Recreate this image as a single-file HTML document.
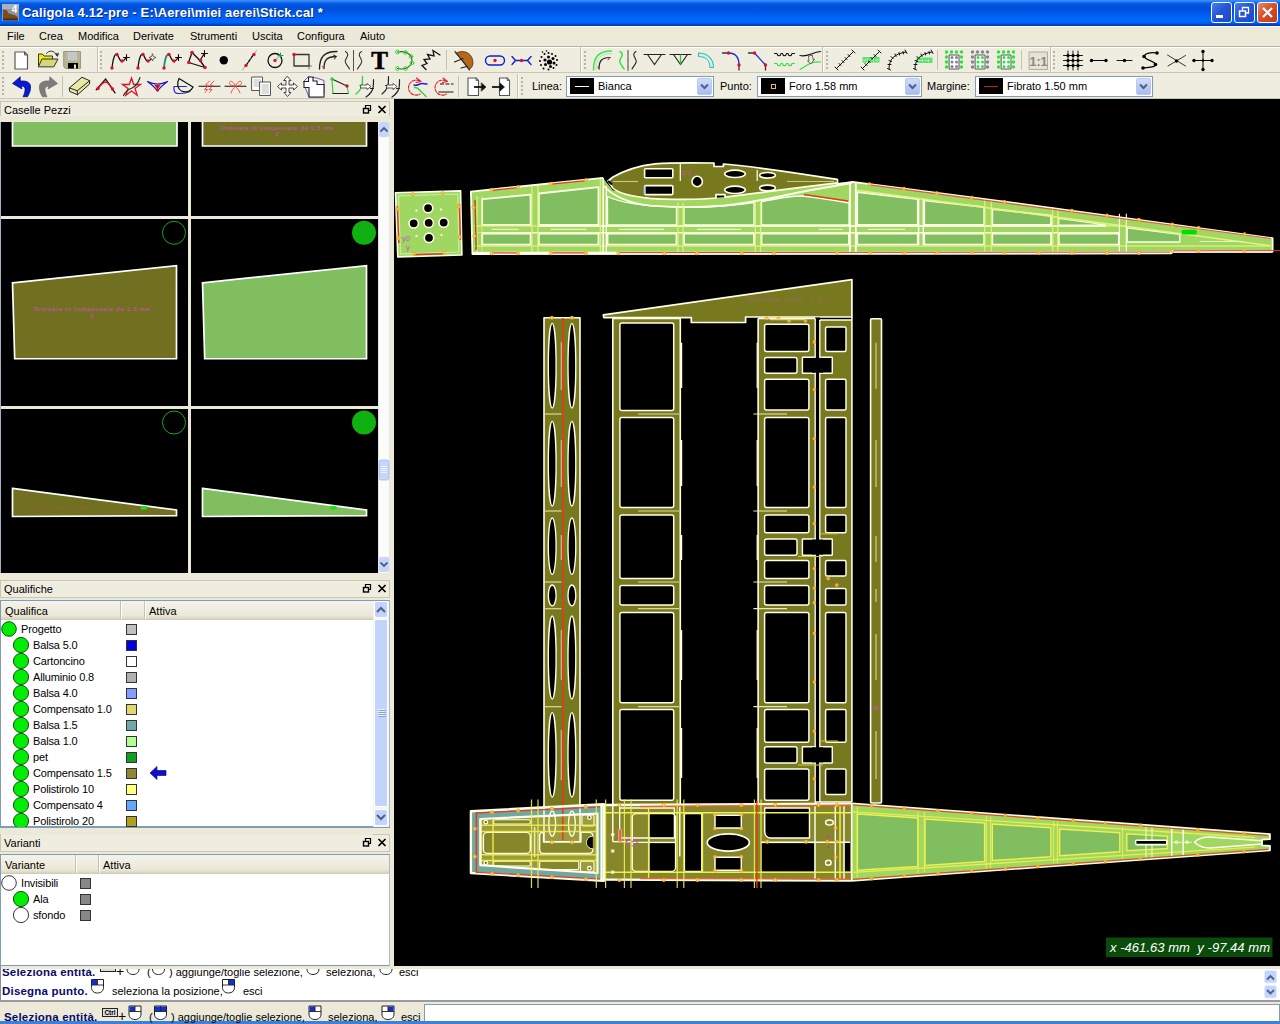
<!DOCTYPE html>
<html lang="it">
<head>
<meta charset="utf-8">
<title>Caligola 4.12-pre</title>
<style>
*{box-sizing:border-box;margin:0;padding:0}
html,body{width:1280px;height:1024px;overflow:hidden;background:#ece9d8;font-family:"Liberation Sans",sans-serif;font-size:11px;color:#000}
.abs{position:absolute}
#title{position:absolute;left:0;top:0;width:1280px;height:26px;background:linear-gradient(to bottom,#3a93ff 0px,#2a80f8 1.5px,#0a5ee8 3px,#0055e0 5px,#0050d8 8px,#0055e6 12px,#0062f8 17px,#0068ff 21px,#0060f0 23px,#0048d0 24.5px,#0038b8 26px)}
#title .cap{position:absolute;left:22px;top:5px;font-family:"Liberation Sans",sans-serif;font-weight:bold;font-size:13px;color:#fff;letter-spacing:0.15px;text-shadow:1px 1px 0 #0a2a80;white-space:nowrap}
#menu{position:absolute;left:0;top:26px;width:1280px;height:20px;background:#ece9d8;border-top:1px solid #fbfaf5}
#menu span{position:absolute;top:3px;font-size:11px;white-space:nowrap}
#tb1{position:absolute;left:0;top:46px;width:1280px;height:27px;background:#efede0;border-top:1px solid #b8b2a2;box-shadow:inset 0 1px 0 #fff;border-bottom:1px solid #c9c6b6}
#tb2{position:absolute;left:0;top:73px;width:1280px;height:26px;background:#efede0;border-bottom:1px solid #c9c6b6}
#canvas{position:absolute;left:394px;top:99px;width:886px;height:867px;background:#000}
#leftdock{position:absolute;left:0;top:99px;width:394px;height:869px;background:#ece9d8}
#bottom{position:absolute;left:0;top:966px;width:1280px;height:58px;background:#ece9d8}

.lbl{position:absolute;top:80px;font-size:11px;white-space:nowrap}
.combo{position:absolute;top:76px;height:21px;background:#fff;border:1px solid #7f9db9}
.combo .sw{position:absolute;left:3px;top:1px;width:24px;height:16px;background:#000}
.combo .tx{position:absolute;left:31px;top:3px;font-size:11px;white-space:nowrap}
.combo .dd{position:absolute;right:1px;top:1px;width:15px;height:17px;border-radius:2px;background:linear-gradient(to bottom,#d3defa,#b9c9f5 60%,#aabcf0);border:1px solid #b7c8f6}
.tbtn{position:absolute;top:2px;width:21px;height:21px;border:1px solid #fff;border-radius:3px;background:linear-gradient(135deg,#4a7ee8 0%,#2456d8 45%,#1c4ac8 100%)}
.tbtn.close{background:linear-gradient(135deg,#e8886a 0%,#d8502a 45%,#c03a18 100%)}

.phd{position:absolute;left:0;width:390px;height:18px;border:1px solid #c9c6b4;background:#efede0}
.phd span{position:absolute;left:3px;top:2px;font-size:11px;white-space:nowrap}
.thd{position:absolute;height:19px;background:linear-gradient(to bottom,#f4f3ea 0,#ece9d8 14px,#dedbc8 17px,#cbc7b8 19px)}
.thd span{position:absolute;top:4px;font-size:11px;white-space:nowrap}
.thd i{position:absolute;top:0;width:2px;height:18px;border-left:1px solid #c5c2b0;border-right:1px solid #fff}
#qrows span{position:absolute;margin-top:1px;letter-spacing:-0.15px;font-size:11px;white-space:nowrap;z-index:2}

#log{position:absolute;left:0;top:0;width:1280px;height:58px;overflow:hidden}
#log .ln{position:absolute;left:0;height:14px;width:1280px;font-size:11px;white-space:nowrap}
#log .ln b{position:absolute;top:0;color:#0a0a6a;font-size:11.5px;letter-spacing:0.2px}
#log .ln span{position:absolute;top:0}
</style>
</head>
<body>
<div id="title"><svg class="abs" style="left:2px;top:4px" width="18" height="18" viewBox="0 0 18 18"><rect x="0" y="0" width="17" height="17" fill="#8a98a0"/><rect x="0" y="0" width="17" height="5" fill="#a8b4b8"/><path d="M1,6C3,5 6,6 6,9L12,11C15,11.5 16,13 16,15.5H1z" fill="#7a4a20"/><path d="M1,14.5H16V16.5H1z" fill="#4a2a10"/><text x="12.5" y="9" font-family="Liberation Sans,sans-serif" font-weight="bold" font-size="10" fill="#fff" text-anchor="middle">4</text></svg><span class="cap">Caligola 4.12-pre - E:\Aerei\miei aerei\Stick.cal *</span>
<div class="tbtn" style="left:1211px"><svg width="19" height="19"><rect x="4" y="12" width="7" height="3" fill="#fff"/></svg></div>
<div class="tbtn" style="left:1234px"><svg width="19" height="19"><path d="M7.5,7.5V4.5H13.5V10H11" stroke="#fff" stroke-width="1.300" fill="none"/><rect x="4.5" y="8" width="6" height="5.5" stroke="#fff" stroke-width="1.5" fill="none"/></svg></div>
<div class="tbtn close" style="left:1257px"><svg width="19" height="19"><path d="M5,5L14,14M14,5L5,14" stroke="#fff" stroke-width="2.200"/></svg></div>
</div>
<div id="menu">
<span style="left:7px">File</span><span style="left:39px">Crea</span><span style="left:78px">Modifica</span><span style="left:133px">Derivate</span><span style="left:190px">Strumenti</span><span style="left:252px">Uscita</span><span style="left:297px">Configura</span><span style="left:360px">Aiuto</span>
</div>
<div id="tb1"></div>
<div id="tb2"></div>
<!--TBSVG-->
<svg id="tbsvg" class="abs" style="left:0;top:0" width="1280" height="100" viewBox="0 0 1280 100" fill="none" stroke-linecap="round" stroke-linejoin="round">
<defs>
<g id="hdl" fill="#b8b5a2" stroke="none"><rect x="0" y="0" width="2" height="2"/><rect x="0" y="4" width="2" height="2"/><rect x="0" y="8" width="2" height="2"/><rect x="0" y="12" width="2" height="2"/><rect x="0" y="16" width="2" height="2"/></g>
<g id="mouseL"><path d="M0.5,0.5h11v7.5c0,3-2.5,5-5.5,5s-5.5-2-5.5-5z" fill="#fff" stroke="#222" stroke-width="1"/><rect x="1" y="1" width="5" height="5" fill="#1030d0" stroke="none"/><path d="M6,0.5v5.5M0.5,6h11" stroke="#222" stroke-width="1"/></g>
</defs>
<!-- handles -->
<use href="#hdl" x="2" y="51"/><use href="#hdl" x="100" y="51"/><use href="#hdl" x="584" y="51"/><use href="#hdl" x="826" y="51"/><use href="#hdl" x="1053" y="51"/>
<use href="#hdl" x="2" y="77"/><use href="#hdl" x="521" y="77"/>
<!-- separators -->
<g stroke="#c5c2b0" stroke-width="1" stroke-linecap="butt">
<path d="M97.5,47v25M580.5,47v25M822.5,47v25M1050.5,47v25"/>
<path d="M446.5,50v20M937.5,50v20M1021.5,50v20"/>
<path d="M62.5,76v21M458.5,76v21M517.5,74v24"/>
</g>
<g stroke="#fff" stroke-width="1" stroke-linecap="butt" opacity="0.8">
<path d="M98.5,47v25M581.5,47v25M823.5,47v25M1051.5,47v25M518.5,74v24"/>
</g>

<!-- ===== TB1 icons ===== -->
<!-- new -->
<g transform="translate(10.5,49)"><path d="M4.5,3h9.5l3,3v14h-12.5z" fill="#fff" stroke="#5a5a5a" stroke-width="1.2"/><path d="M14,3v3h3" stroke="#5a5a5a" stroke-width="1"/></g>
<!-- open -->
<g transform="translate(37,49)"><path d="M1.5,17.5v-12.5h4l1.5,2h8.5v2.5" fill="#f2ee00" stroke="#333" stroke-width="1"/><path d="M1.5,17.5l3.5-7.5h16l-4,7.5z" fill="#d6d67a" stroke="#333" stroke-width="1"/><path d="M9.5,4.5c2-3.5,8-3.5,10.5,2" stroke="#333" stroke-width="1"/><path d="M18.5,5l2,2.5l1-3z" fill="#333" stroke="#333" stroke-width="0.6"/></g>
<!-- save -->
<g transform="translate(61.5,49)"><path d="M2.5,2.5h16.5v17h-15l-1.5-1.5z" fill="#b4b490" stroke="#9a9a80" stroke-width="1"/><rect x="6" y="3" width="9.5" height="8.5" fill="#c3c7cb" stroke="none"/><rect x="6.5" y="14" width="10" height="5.5" fill="#000" stroke="none"/><rect x="12.5" y="15.5" width="2" height="4" fill="#e8e8e0" stroke="none"/></g>
<!-- curve+ 1 -->
<g transform="translate(109,49)"><path d="M3,19C4,9 6,4 8,5.5C10,7 10,12 13,12C15,12 16,10 17.5,8" stroke="#111" stroke-width="1.3"/><g fill="#e0102a" stroke="none"><circle cx="3" cy="19" r="1.7"/><circle cx="8" cy="5.5" r="1.7"/><circle cx="13" cy="12" r="1.7"/></g><path d="M14.5,8.5h6M17.5,5.5v6" stroke="#111" stroke-width="1.1"/></g>
<!-- curve star -->
<g transform="translate(135,49)"><path d="M3,19C4,9 6,4 8,5.5C10,7 10,12 13,12C14.5,12 15,11 16,10" stroke="#111" stroke-width="1.3"/><g fill="#e0102a" stroke="none"><circle cx="3" cy="19" r="1.7"/><circle cx="8" cy="5.5" r="1.7"/><circle cx="13" cy="12" r="1.7"/></g><path d="M17.5,5l1,2.5l2.5,1l-2.5,1l-1,2.5l-1-2.5l-2.5-1l2.5-1z" fill="#efede0" stroke="#444" stroke-width="0.8"/></g>
<!-- curve+ teal -->
<g transform="translate(161,49)"><path d="M3,19C4,9 6,4 8,5.5" stroke="#109080" stroke-width="1.8"/><path d="M8,5.5C10,7 10,12 13,12C15,12 16,10 17.5,8" stroke="#111" stroke-width="1.3"/><g fill="#e0102a" stroke="none"><circle cx="3" cy="19" r="1.7"/><circle cx="8" cy="5.5" r="1.7"/><circle cx="13" cy="12" r="1.7"/></g><path d="M14.5,8.5h6M17.5,5.5v6" stroke="#111" stroke-width="1.1"/></g>
<!-- polyline+ -->
<g transform="translate(187,49)"><path d="M5,3.5L1.5,13.5L18,18.5L13,11.5z" stroke="#111" stroke-width="1.3" fill="none"/><path d="M13,11.5L17,5" stroke="#111" stroke-width="1.3"/><g fill="#e0102a" stroke="none"><circle cx="5" cy="3.5" r="1.8"/><circle cx="1.8" cy="13.5" r="1.8"/><circle cx="18" cy="18.5" r="1.8"/><circle cx="13.5" cy="11.5" r="1.8"/></g><path d="M14.5,4.5h6M17.5,1.5v6" stroke="#111" stroke-width="1.1"/></g>
<!-- dot -->
<circle cx="223.8" cy="60.2" r="4.2" fill="#000" stroke="none"/>
<!-- line w/ pts -->
<g transform="translate(238.5,49)"><path d="M4,21L18,1.5" stroke="#50a090" stroke-width="0.8"/><path d="M7.5,16.5L15,5.5" stroke="#111" stroke-width="1.3" stroke-dasharray="3 1.5"/><circle cx="7.5" cy="16.5" r="1.7" fill="#e0102a" stroke="none"/><circle cx="15.5" cy="5.5" r="1.7" fill="#e0102a" stroke="none"/></g>
<!-- circle -->
<g transform="translate(264,49)"><circle cx="11" cy="11.5" r="7" stroke="#111" stroke-width="1.3"/><circle cx="11" cy="11.5" r="1.7" fill="#e0102a" stroke="none"/><path d="M11,11.5L16,6.5" stroke="#20a040" stroke-width="0.8"/><path d="M14,6.5h5M16.5,4v5" stroke="#20a040" stroke-width="1"/></g>
<!-- rect -->
<g transform="translate(291.5,49)"><rect x="2.5" y="5.5" width="15" height="11.5" stroke="#333" stroke-width="1.3"/><path d="M17.5,17h2.5M17.5,17v3" stroke="#555" stroke-width="0.8"/><circle cx="2.5" cy="5.5" r="1.7" fill="#e0102a" stroke="none"/></g>
<!-- arc offset -->
<g transform="translate(316,49)"><path d="M3.5,20C3.5,8 8,2.5 21,2.5" stroke="#222" stroke-width="1.3"/><path d="M8,19.5C8,11 11,7.5 20,7.5" stroke="#222" stroke-width="1.3"/><path d="M20,7.5l-2.5,-1.5M20,7.5l-1.5,2.5" stroke="#222" stroke-width="1"/><path d="M8,19.5l-1.5,-2" stroke="#d02030" stroke-width="1"/></g>
<!-- mirror -->
<g transform="translate(342.5,49)"><path d="M3,2.5C9,6 1,10 3,13.5C4,16 6,18 7,20" stroke="#333" stroke-width="1.1"/><path d="M19,2.5C13,6 21,10 19,13.5C18,16 16,18 15,20" stroke="#333" stroke-width="1.1"/><path d="M11,1.5v20" stroke="#333" stroke-width="0.9" stroke-dasharray="4 1 1 1"/></g>
<!-- T -->
<text x="379.5" y="69" font-family="Liberation Serif,serif" font-weight="bold" font-size="25" fill="#000" stroke="#000" stroke-width="0.6" text-anchor="middle">T</text>
<!-- green curve -->
<g transform="translate(394,49)"><path d="M3.5,3C9,2 12,3 14,4.5C17,6 18,9 18,12C18,15 15,18 12.5,19C9,20.5 6,20 3.5,19.5" stroke="#2a5a2a" stroke-width="1.1"/><g stroke="#30e030" stroke-width="1" fill="none"><circle cx="3.5" cy="3" r="1.9"/><circle cx="11.5" cy="3.5" r="1.9"/><circle cx="17" cy="7.5" r="1.9"/><circle cx="18" cy="14" r="1.9"/><circle cx="11.5" cy="19.5" r="1.9"/><circle cx="3.5" cy="19.5" r="1.9"/></g></g>
<!-- zigzag -->
<g transform="translate(420,49)"><path d="M6,20.5L2,16.5L7,14.5L4,10.5L10,10L7.5,5.5L14,7L13,1.5L20,6" stroke="#111" stroke-width="1.3" stroke-linejoin="miter"/></g>
<!-- brown fan -->
<g transform="translate(452,49)"><path d="M4,4C12,0 21,4 21,14C21,17 19,19.5 17,20.5L11,12z" fill="#b4681c" stroke="#5a3008" stroke-width="0.8"/><path d="M3,2.5L17.5,21" stroke="#222" stroke-width="1.2"/><path d="M2.5,13L11,9.5M9,19L15,17.5" stroke="#222" stroke-width="1.2"/></g>
<!-- capsule -->
<g transform="translate(484,49)"><rect x="1.5" y="7" width="19" height="9" rx="4.5" stroke="#1020d0" stroke-width="1.4"/><circle cx="11" cy="11.5" r="1.7" fill="#e0102a" stroke="none"/></g>
<!-- >-< -->
<g transform="translate(510.5,49)"><path d="M1.5,7.5L5,11.5L1.5,15.5M5,11.5H17M20.5,7.5L17,11.5L20.5,15.5" stroke="#1020d0" stroke-width="1.4"/><circle cx="11" cy="11.5" r="1.8" fill="#d02020" stroke="none"/></g>
<!-- dots -->
<g transform="translate(536.5,49)" fill="#000" stroke="none"><circle cx="13" cy="13" r="2.6"/><circle cx="8.5" cy="11" r="1.6"/><circle cx="12" cy="8" r="1.5"/><circle cx="16.5" cy="9.5" r="1.5"/><circle cx="17.5" cy="14" r="1.5"/><circle cx="14" cy="17.5" r="1.5"/><circle cx="9" cy="15.5" r="1.5"/><circle cx="5" cy="8" r="1"/><circle cx="8" cy="5" r="1"/><circle cx="12" cy="4" r="1"/><circle cx="15.5" cy="5" r="1"/><circle cx="19" cy="7" r="1"/><circle cx="20.5" cy="11" r="1"/><circle cx="20" cy="16" r="1"/><circle cx="17" cy="19" r="1"/><circle cx="12" cy="20.5" r="1"/><circle cx="7" cy="19.5" r="1"/><circle cx="4.5" cy="16" r="1"/><circle cx="3.5" cy="12" r="1"/><circle cx="10" cy="2" r="0.8"/><circle cx="6" cy="3" r="0.8"/></g>
<!-- green arc offset -->
<g transform="translate(591.5,49)"><path d="M2,21C2,8 7,2 20,2" stroke="#40e050" stroke-width="1.5"/><path d="M4.5,21C4.5,9 9,4.5 20,4.5" stroke="#a0f0a0" stroke-width="1"/><path d="M7.5,20C7.5,12 10,8.5 18.5,8.5" stroke="#222" stroke-width="1.2"/><path d="M18.5,8.5l-2,2.5" stroke="#d02030" stroke-width="1"/><path d="M7.5,20l-1-2" stroke="#d02030" stroke-width="1"/></g>
<!-- mirror green -->
<g transform="translate(617,49)"><path d="M3,2.5C9,6 1,10 3,13.5C4,16 6,18 7,20" stroke="#40e050" stroke-width="1.6"/><path d="M19,2.5C13,6 21,10 19,13.5C18,16 16,18 15,20" stroke="#222" stroke-width="1.1"/><path d="M11,1.5v20" stroke="#222" stroke-width="0.9" stroke-dasharray="4 1 1 1"/></g>
<!-- triangle 1 -->
<g transform="translate(643.5,49)"><path d="M0.5,5.5h21M4,5.5L11,15.5L18,5.5" stroke="#222" stroke-width="1.1" stroke-linejoin="miter"/></g>
<!-- triangle 2 -->
<g transform="translate(669.5,49)"><path d="M0.5,5.5h21M4,5.5L11,15.5L18,5.5" stroke="#222" stroke-width="1.1" stroke-linejoin="miter"/><path d="M11,6v9" stroke="#20d030" stroke-width="1.3"/></g>
<!-- cyan arc -->
<g transform="translate(696,49)"><path d="M2.5,4C12,4 17.5,10 17.5,18.5h-3.5C14,12 10,7.5 2.5,7.5z" fill="#c8f4f0" stroke="#40b8b0" stroke-width="1.1"/></g>
<!-- fillet -->
<g transform="translate(721,49)"><path d="M1.5,4h6" stroke="#333" stroke-width="1.3"/><path d="M18,16v5" stroke="#333" stroke-width="1.3"/><path d="M7.5,4C14,4 18,8 18,16" stroke="#2030d0" stroke-width="1.3"/><circle cx="7.5" cy="4" r="1.7" fill="#e0102a" stroke="none"/><circle cx="18" cy="16" r="1.7" fill="#e0102a" stroke="none"/></g>
<!-- chamfer -->
<g transform="translate(747,49)"><path d="M1.5,4h6" stroke="#333" stroke-width="1.3"/><path d="M18.5,16v5" stroke="#333" stroke-width="1.3"/><path d="M7.5,4L18.5,16" stroke="#2030d0" stroke-width="1.3"/><circle cx="7.5" cy="4" r="1.7" fill="#e0102a" stroke="none"/><circle cx="18.5" cy="16" r="1.7" fill="#e0102a" stroke="none"/></g>
<!-- waves -->
<g transform="translate(773.5,49)"><path d="M1,4.5h2.5c0.5,3 3.5,3 4,0h1.5c0.5,3 3.5,3 4,0h1.5c0.5,3 3.5,3 4,0h2.5" stroke="#111" stroke-width="1.2"/><path d="M1,14.5h2.5c0.5,3 3.5,3 4,0h1.5c0.5,3 3.5,3 4,0h1.5c0.5,3 3.5,3 4,0h2.5" stroke="#30e040" stroke-width="1.2"/></g>
<!-- curves arrows -->
<g transform="translate(799.5,49)"><path d="M0.5,6.5C8,8.5 12,3.5 21,2.5" stroke="#111" stroke-width="1.2"/><path d="M0.5,20.5C8,16 12,12 21,13" stroke="#30e040" stroke-width="1.2"/><path d="M9,7.5l0.5,4.5h-1.5l3.5,3l3.5-5l-1.5,0.5l-0.5-4z" stroke="#333" stroke-width="0.7" fill="#efede0"/></g>
<!-- rulers -->
<g transform="translate(834,49)" stroke="#111" stroke-width="1"><path d="M2.5,19.5L19.5,2.5"/><path d="M1,18l3,3M5,14.5l2,2M8,11.5l2,2M11,8.5l2,2M14,5.5l2,2M18,1l3,3"/></g>
<g transform="translate(860,49)"><rect x="2.5" y="8" width="17" height="5.5" fill="#60e070" stroke="none"/><g stroke="#111" stroke-width="1"><path d="M2.5,19.5L19.5,2.5"/><path d="M1,18l3,3M5,14.5l2,2M8,11.5l2,2M11,8.5l2,2M14,5.5l2,2M18,1l3,3"/></g><path d="M4,11h2M7.5,10v2M10,11h2M13.5,10v2M16,11h2" stroke="#c8ffd0" stroke-width="0.9"/></g>
<g transform="translate(886,49)" stroke="#111" stroke-width="1"><path d="M3,20C3,10 8,5 20,3"/><path d="M1.5,19.5l3,1.5M2,15.5h3M3,11.5l2.5,1M5,7.5l2,2M9,5l1,2.5M13,3.5l0.5,2.5M17,2.5l0.5,2.5M19,1l2,3.5"/></g>
<g transform="translate(912,49)"><rect x="4.5" y="8.5" width="16" height="5.5" fill="#60e070" stroke="none"/><g stroke="#111" stroke-width="1"><path d="M3,20C3,10 8,5 20,3"/><path d="M1.5,19.5l3,1.5M2,15.5h3M3,11.5l2.5,1M5,7.5l2,2M9,5l1,2.5M13,3.5l0.5,2.5M17,2.5l0.5,2.5M19,1l2,3.5"/></g><path d="M7,11.5h2M10.5,10.5v2M13,11.5h2M16.5,10.5v2" stroke="#c8ffd0" stroke-width="0.9"/></g>
<!-- grids -->
<g transform="translate(943.5,49)"><g fill="#30e040" stroke="none"><circle cx="3" cy="3" r="1.7"/><circle cx="8" cy="3" r="1.7"/><circle cx="13" cy="3" r="1.7"/><circle cx="18" cy="3" r="1.7"/><circle cx="3" cy="8" r="1.7"/><circle cx="18" cy="8" r="1.7"/><circle cx="3" cy="13" r="1.7"/><circle cx="18" cy="13" r="1.7"/><circle cx="3" cy="18" r="1.7"/><circle cx="18" cy="18" r="1.7"/></g><rect x="6" y="6" width="9.5" height="14" fill="#fff" stroke="#444" stroke-width="0.9"/><g fill="#888098" stroke="none"><circle cx="8.5" cy="8.5" r="1.5"/><circle cx="13" cy="8.5" r="1.5"/><circle cx="8.5" cy="13" r="1.5"/><circle cx="13" cy="13" r="1.5"/><circle cx="8.5" cy="17.5" r="1.5"/><circle cx="13" cy="17.5" r="1.5"/></g></g>
<g transform="translate(969.5,49)"><g fill="#888098" stroke="none"><circle cx="3" cy="3" r="1.7"/><circle cx="8" cy="3" r="1.7"/><circle cx="13" cy="3" r="1.7"/><circle cx="18" cy="3" r="1.7"/><circle cx="3" cy="8" r="1.7"/><circle cx="18" cy="8" r="1.7"/><circle cx="3" cy="13" r="1.7"/><circle cx="18" cy="13" r="1.7"/><circle cx="3" cy="18" r="1.7"/><circle cx="18" cy="18" r="1.7"/></g><rect x="6" y="6" width="9.5" height="14" fill="#fff" stroke="#444" stroke-width="0.9"/><g fill="#30e040" stroke="none"><circle cx="8.5" cy="8.5" r="1.5"/><circle cx="13" cy="8.5" r="1.5"/><circle cx="8.5" cy="13" r="1.5"/><circle cx="13" cy="13" r="1.5"/><circle cx="8.5" cy="17.5" r="1.5"/><circle cx="13" cy="17.5" r="1.5"/></g></g>
<g transform="translate(995.5,49)"><g fill="#30e040" stroke="none"><circle cx="3" cy="3" r="1.7"/><circle cx="8" cy="3" r="1.7"/><circle cx="13" cy="3" r="1.7"/><circle cx="18" cy="3" r="1.7"/><circle cx="3" cy="8" r="1.7"/><circle cx="18" cy="8" r="1.7"/><circle cx="3" cy="13" r="1.7"/><circle cx="18" cy="13" r="1.7"/><circle cx="3" cy="18" r="1.7"/><circle cx="18" cy="18" r="1.7"/></g><rect x="6" y="6" width="9.5" height="14" fill="#fff" stroke="#444" stroke-width="0.9"/><g fill="#30e040" stroke="none"><circle cx="8.5" cy="8.5" r="1.5"/><circle cx="13" cy="8.5" r="1.5"/><circle cx="8.5" cy="13" r="1.5"/><circle cx="13" cy="13" r="1.5"/><circle cx="8.5" cy="17.5" r="1.5"/><circle cx="13" cy="17.5" r="1.5"/></g></g>
<!-- 1:1 -->
<g transform="translate(1027.5,49)"><rect x="2" y="3" width="18" height="17.5" fill="#e6e3d2" stroke="#a8a590" stroke-width="0.9"/><text x="11" y="16.5" font-family="Liberation Sans,sans-serif" font-weight="bold" font-size="12.5" fill="#8a8878" stroke="none" text-anchor="middle">1:1</text></g>
<!-- snap grid -->
<g transform="translate(1061.5,49)"><path d="M2,6.5h19M2,11.5h19M2,16.5h19M6.5,2v19M11.5,2v19M16.5,2v19" stroke="#000" stroke-width="0.9"/><g fill="#000" stroke="none"><circle cx="6.5" cy="6.5" r="1.6"/><circle cx="11.5" cy="6.5" r="1.6"/><circle cx="16.5" cy="6.5" r="1.6"/><circle cx="6.5" cy="11.5" r="1.6"/><circle cx="11.5" cy="11.5" r="1.6"/><circle cx="16.5" cy="11.5" r="1.6"/><circle cx="6.5" cy="16.5" r="1.6"/><circle cx="11.5" cy="16.5" r="1.6"/><circle cx="16.5" cy="16.5" r="1.6"/></g></g>
<!-- line endpoints -->
<g transform="translate(1088,49)"><path d="M3.5,11.5h14.5" stroke="#000" stroke-width="1"/><circle cx="3.5" cy="11.5" r="1.7" fill="#000" stroke="none"/><circle cx="18" cy="11.5" r="1.7" fill="#000" stroke="none"/></g>
<!-- midpoint -->
<g transform="translate(1113.5,49)"><path d="M3.5,11.5h15" stroke="#000" stroke-width="0.9"/><circle cx="11" cy="11.5" r="1.7" fill="#000" stroke="none"/></g>
<!-- S -->
<g transform="translate(1139.5,49)"><path d="M17.5,4C11,3 4,4.5 5,8C6,11 15,12 16,15.5C16.5,18 9,18.5 3.5,19" stroke="#000" stroke-width="1.2"/><g fill="#000" stroke="none"><circle cx="17.5" cy="4" r="1.8"/><circle cx="4.5" cy="7.5" r="1.8"/><circle cx="16" cy="15.5" r="1.8"/><circle cx="3.5" cy="19" r="1.8"/></g></g>
<!-- X -->
<g transform="translate(1165.5,49)"><path d="M2,6L20,17M2.5,17L20,6.5" stroke="#222" stroke-width="0.9"/><circle cx="11" cy="12" r="1.7" fill="#000" stroke="none"/></g>
<!-- cross -->
<g transform="translate(1191.5,49)"><path d="M2,11.5h19M11.5,2.5v18" stroke="#000" stroke-width="1"/><g fill="#000" stroke="none"><circle cx="2.5" cy="11.5" r="1.7"/><circle cx="20.5" cy="11.5" r="1.7"/><circle cx="11.5" cy="2.5" r="1.7"/><circle cx="11.5" cy="20.5" r="1.7"/><circle cx="11.5" cy="11.5" r="1.3"/></g></g>
<!-- ===== TB2 icons ===== -->
<g transform="translate(11,75.5)"><path d="M9,1.5L1.5,8L11,13.5L10.5,10.5C13,10.5 14.5,12 14,15C13.8,17.5 13,19.5 12,21.2L16.5,21.2C18.5,18 20,14 19.5,10.5C19,6.5 15,5 9.5,5.5z" fill="#0a18d8" stroke="#000a60" stroke-width="0.7"/></g>
<g transform="translate(59,75.5) scale(-1,1)"><path d="M9,1.5L1.5,8L11,13.5L10.5,10.5C13,10.5 14.5,12 14,15C13.8,17.5 13,19.5 12,21.2L16.5,21.2C18.5,18 20,14 19.5,10.5C19,6.5 15,5 9.5,5.5z" fill="#7c7c7c" stroke="#6a6a6a" stroke-width="0.7"/></g>
<!-- eraser -->
<g transform="translate(68.5,75.5)" stroke="#222" stroke-width="1" stroke-linejoin="round"><path d="M1,12.4L13.4,1.75L21.25,5.25L21,8.6L9,19.25L1.5,16z" fill="#e9e9a4"/><path d="M1,12.4L8.75,15.25L21.25,5.25M8.75,15.25L9,19.25" fill="none"/></g>
<!-- A -->
<g transform="translate(95,75.5)"><path d="M1.25,14.25L10.6,3.6L20,17.4" stroke="#111" stroke-width="1.3" stroke-linejoin="miter"/><path d="M3,13C6,9 8.5,6.5 10.6,6.5C12.5,6.5 15,9 17.5,13.5" stroke="#e0102a" stroke-width="1.4"/><circle cx="3" cy="13" r="1.7" fill="#e0102a" stroke="none"/><circle cx="17.5" cy="13.5" r="1.7" fill="#e0102a" stroke="none"/></g>
<!-- star -->
<g transform="translate(121,75.5)"><path d="M10.5,2.5L12.7,9H19.5L14,13L16.2,19.8L10.5,15.6L4.8,19.8L7,13L1.5,9H8.3z" stroke="#e0102a" stroke-width="1.3" stroke-linejoin="miter"/><path d="M2.5,20C5,15 8,13.5 11,12.5C15,11 17,8 19,2" stroke="#1a3a1a" stroke-width="1.2"/></g>
<!-- blue bird -->
<g transform="translate(146.5,75.5)"><path d="M1,6C5,8 8,8.5 11,8.5C14,8.5 17,8 21,6C17,9 13.5,12 11,15.5C8.5,12 5,9 1,6z" stroke="#1818c0" stroke-width="1.2" fill="none"/><path d="M7.5,9h7l-3.5,5z" fill="#d01030" stroke="none"/><circle cx="11" cy="14.5" r="1.5" fill="#d01030" stroke="none"/></g>
<!-- bowl -->
<g transform="translate(172.5,75.5)"><path d="M1.5,11H14M1.5,11C1,15 2,17.5 4.5,17.8C9,18.3 14,17.5 17.5,16" stroke="#2828c8" stroke-width="1.2"/><path d="M6.5,3L20.5,11.5C19,15.5 14,17.5 9,15.5C5,13.5 4,8 6.5,3z" stroke="#111" stroke-width="1.2"/></g>
<!-- red zigzag -->
<g transform="translate(198.5,75.5)"><path d="M0.5,10.75h21" stroke="#111" stroke-width="1"/><path d="M11,5.5L7,9.5L10,10L6,14L9,14L6.5,17M15.5,5.5L11.5,9.5L14.5,10L10.5,14L13.5,14L11,17" stroke="#f04040" stroke-width="0.9"/></g>
<!-- butterfly -->
<g transform="translate(224.5,75.5)"><path d="M0.5,10.75h21" stroke="#111" stroke-width="1"/><path d="M11,10.5C9,6 5.5,4.5 5,7C4.5,9.5 8,10.5 11,10.5C14,10.5 17.5,9.5 17,7C16.5,4.5 13,6 11,10.5C10,13 7,14 6.5,17.5M11,10.5C12,13 15,14 15.5,17.5" stroke="#f04040" stroke-width="0.9"/></g>
<!-- copy -->
<g transform="translate(250.5,75.5)"><rect x="1.5" y="1.5" width="10.5" height="13.5" fill="#fff" stroke="#555" stroke-width="1"/><path d="M3.5,4.5h6.5M3.5,6.5h6.5M3.5,8.5h6.5M3.5,10.5h6.5" stroke="#aaa" stroke-width="0.8"/><rect x="9.5" y="6.5" width="10.5" height="13.5" fill="#fff" stroke="#555" stroke-width="1"/><path d="M11.5,9.5h6.5M11.5,11.5h6.5M11.5,13.5h6.5M11.5,15.5h6.5M11.5,17.5h6.5" stroke="#aaa" stroke-width="0.8"/></g>
<!-- move -->
<g transform="translate(276.5,75.5)"><path d="M11,1L14.5,5H12.5V9.5H17V7.5L21,11L17,14.5V12.5H12.5V17H14.5L11,21L7.5,17H9.5V12.5H5V14.5L1,11L5,7.5V9.5H9.5V5H7.5z" fill="#fff" stroke="#444" stroke-width="1" stroke-linejoin="miter"/></g>
<!-- 3d piece -->
<g transform="translate(302.5,75.5)"><path d="M6,1.5L14,2.5L21.5,5V18L20,21.5H6.5L2.5,11.5L1.5,6z" fill="#f4f4ff" stroke="#3838a0" stroke-width="0.8"/><path d="M6,1.5H10.5V5.5H14.5V9H21.5V21.5H6.5V12H1.5V6H6z" fill="#fff" stroke="#222" stroke-width="1.1" stroke-linejoin="miter"/></g>
<!-- green triangle -->
<g transform="translate(329,75.5)"><path d="M3,3.5L4,18" stroke="#30d040" stroke-width="1.2"/><path d="M3,3.5L18,10.5" stroke="#222" stroke-width="1.1"/><path d="M4,18H19.5" stroke="#222" stroke-width="1.2"/><path d="M18,10.5L19.5,18" stroke="#30d040" stroke-width="1.1"/><circle cx="3" cy="3.5" r="1.7" fill="#30d040" stroke="none"/><circle cx="18" cy="10.5" r="1.7" fill="#d01030" stroke="none"/></g>
<!-- profile arrow 1 -->
<g transform="translate(354,75.5)"><path d="M8.5,1C8.5,8 9,13 2,18.5" stroke="#30d040" stroke-width="1.3"/><path d="M8.5,10H5.5" stroke="#30d040" stroke-width="1"/><path d="M19.5,4C19.5,11 20,16 12,21.5" stroke="#222" stroke-width="1.2"/><path d="M19.5,13H16.5" stroke="#222" stroke-width="1"/><path d="M7,9.5H13V8L17,11L13,14V12.5H7z" fill="#fff" stroke="#333" stroke-width="0.8"/></g>
<g transform="translate(380,75.5)"><path d="M8.5,1C8.5,8 9,13 2,18.5" stroke="#222" stroke-width="1.2"/><path d="M8.5,10H5.5" stroke="#222" stroke-width="1"/><path d="M19.5,4C19.5,11 20,16 12,21.5" stroke="#222" stroke-width="1.2"/><path d="M19.5,13H16.5" stroke="#222" stroke-width="1"/><path d="M7,9.5H13V8L17,11L13,14V12.5H7z" fill="#fff" stroke="#333" stroke-width="0.8"/></g>
<!-- circle arrows -->
<g transform="translate(406,75.5)"><path d="M13.5,5.5A7.5,7.5 0 1 0 14,18.5" stroke="#e82030" stroke-width="1.1" stroke-dasharray="3 1.3"/><path d="M10.5,2.5L15,6L10,7" stroke="#e82030" stroke-width="1.1"/><path d="M8,9.5C11,11 13,8 16,8C18,8 19,8.5 21,8.5" stroke="#1828d8" stroke-width="1.5"/><path d="M8.5,12C12,11.5 13,14 15,16C17,18 18,18.5 20,21" stroke="#30d040" stroke-width="1.5"/></g>
<g transform="translate(432.5,75.5)"><path d="M13.5,5.5A7.5,7.5 0 1 0 14,18.5" stroke="#e82030" stroke-width="1.1" stroke-dasharray="3 1.3"/><path d="M10.5,2.5L15,6L10,7" stroke="#e82030" stroke-width="1.1"/><path d="M7.5,8.5H21" stroke="#111" stroke-width="1.2" stroke-dasharray="4 1.5" stroke-linecap="butt"/><path d="M6,16.5H21" stroke="#666" stroke-width="1.6" stroke-linecap="butt"/></g>
<!-- export -->
<g transform="translate(466,75.5)"><path d="M2,2.5H10L12.5,5V20H2z" fill="#fff" stroke="#555" stroke-width="1.1"/><path d="M10,2.5V5H12.5" stroke="#555" stroke-width="0.8"/><path d="M8,11.5H17" stroke="#111" stroke-width="1.8" stroke-linecap="butt"/><path d="M15.5,7.5L20,11.5L15.5,15.5z" fill="#111" stroke="#111" stroke-width="0.6"/></g>
<g transform="translate(491,75.5)"><path d="M8.5,2.5H16L18.5,5V20H8.5z" fill="#fff" stroke="#555" stroke-width="1.1"/><path d="M16,2.5V5H18.5" stroke="#555" stroke-width="0.8"/><path d="M1,11.5H10" stroke="#111" stroke-width="1.8" stroke-linecap="butt"/><path d="M9,7.5L13.5,11.5L9,15.5z" fill="#111" stroke="#111" stroke-width="0.6"/></g>

</svg>

<!--/TBSVG-->

<span class="lbl" style="left:532px">Linea:</span>
<div class="combo" style="left:566px;width:148px"><div class="sw"><svg width="24" height="16"><path d="M5,8.5h14" stroke="#fff" stroke-width="1"/></svg></div><span class="tx">Bianca</span><div class="dd"><svg width="13" height="15" style="position:absolute;left:0;top:0"><path d="M3,5.5l3.5,3.5l3.5,-3.5" stroke="#4d6185" stroke-width="2" fill="none"/></svg></div></div>
<span class="lbl" style="left:720px">Punto:</span>
<div class="combo" style="left:757px;width:165px"><div class="sw"><svg width="24" height="16"><rect x="10.5" y="6.5" width="4" height="4" stroke="#e8b878" stroke-width="1" fill="none"/></svg></div><span class="tx">Foro 1.58 mm</span><div class="dd"><svg width="13" height="15" style="position:absolute;left:0;top:0"><path d="M3,5.5l3.5,3.5l3.5,-3.5" stroke="#4d6185" stroke-width="2" fill="none"/></svg></div></div>
<span class="lbl" style="left:927px">Margine:</span>
<div class="combo" style="left:975px;width:178px"><div class="sw"><svg width="24" height="16"><path d="M5,8.5h14" stroke="#d01818" stroke-width="1"/></svg></div><span class="tx">Fibrato 1.50 mm</span><div class="dd"><svg width="13" height="15" style="position:absolute;left:0;top:0"><path d="M3,5.5l3.5,3.5l3.5,-3.5" stroke="#4d6185" stroke-width="2" fill="none"/></svg></div></div>
<!--LEFT-->
<div id="leftdock">
<!-- panel headers -->
<div class="phd" style="top:2px"><span>Caselle Pezzi</span></div>
<div class="phd" style="top:481px"><span>Qualifiche</span></div>
<div class="phd" style="top:735px"><span>Varianti</span></div>
<!-- caselle content -->
<div class="abs" style="left:0;top:22px;width:390px;height:452px;background:#000;border-left:1px solid #9fb0c8;border-top:1px solid #d8d6c8"></div>
<!-- qualifiche list -->
<div class="abs" style="left:0;top:501px;width:390px;height:227px;background:#fff;border:1px solid #7f9db9;border-right-color:#a8b8d0"></div>
<div class="thd" style="left:1px;top:502px;width:372px"><span style="left:4px">Qualifica</span><span style="left:148px">Attiva</span><i style="left:119px"></i><i style="left:143px"></i></div>
<!-- varianti list -->
<div class="abs" style="left:0;top:755px;width:390px;height:112px;background:#fff;border:1px solid #7f9db9;border-right-color:#a8b8d0"></div>
<div class="thd" style="left:1px;top:756px;width:388px"><span style="left:4px">Variante</span><span style="left:102px">Attiva</span><i style="left:74px"></i><i style="left:97px"></i></div>
<div id="qrows">
<span style="left:21px;top:523px">Progetto</span>
<span style="left:33px;top:539px">Balsa 5.0</span>
<span style="left:33px;top:555px">Cartoncino</span>
<span style="left:33px;top:571px">Alluminio 0.8</span>
<span style="left:33px;top:587px">Balsa 4.0</span>
<span style="left:33px;top:603px">Compensato 1.0</span>
<span style="left:33px;top:619px">Balsa 1.5</span>
<span style="left:33px;top:635px">Balsa 1.0</span>
<span style="left:33px;top:651px">pet</span>
<span style="left:33px;top:667px">Compensato 1.5</span>
<span style="left:33px;top:683px">Polistirolo 10</span>
<span style="left:33px;top:699px">Compensato 4</span>
<span style="left:33px;top:715px;height:12px;overflow:hidden">Polistirolo 20</span>
<span style="left:21px;top:777px">Invisibili</span>
<span style="left:33px;top:793px">Ala</span>
<span style="left:33px;top:809px">sfondo</span>
</div>
<svg class="abs" style="left:0;top:-99px" width="394" height="968" viewBox="0 0 394 968">
<!-- header icons -->
<g id="hic" stroke="#000" fill="none"><path d="M365.5,108.5V105.5H370.5V110.5H368.5" stroke-width="1.2"/><rect x="363.5" y="108.5" width="5" height="4.5" stroke-width="1.4"/><path d="M378.5,106L385.5,113M385.5,106L378.5,113" stroke-width="1.7"/></g>
<use href="#hic" y="479"/><use href="#hic" y="733"/>
<!-- caselle grid -->
<g fill="#ece9d8"><rect x="188" y="122" width="3" height="451"/><rect x="1" y="216" width="377" height="3"/><rect x="1" y="406" width="377" height="3"/></g>
<g stroke="#fff" stroke-width="1.7" stroke-linejoin="miter">
<path d="M12.5,121V146H177V121" fill="#80be60"/>
<path d="M202.5,121V146H366.5V121" fill="#707020"/>
<path d="M12.5,282.8L176.5,265.6V358.750H14.7z" fill="#707020"/>
<path d="M202.5,282.8L366.5,265.6V358.750H204.7z" fill="#80be60"/>
<path d="M12.5,488.4L176.5,510V515.6L12.5,516.5z" fill="#707020"/>
<path d="M202.5,488.4L366.5,510V515.6L202.5,516.5z" fill="#80be60"/>
</g>
<rect x="0" y="116" width="394" height="6" fill="#ece9d8"/>
<rect x="141" y="506" width="6" height="3.5" fill="#20e020"/><rect x="330.5" y="506" width="6" height="3.5" fill="#20e020"/>
<circle cx="174" cy="232.8" r="11.5" stroke="#20a020" stroke-width="1" fill="none"/><circle cx="364" cy="232.8" r="12" fill="#10b010"/>
<circle cx="174" cy="422.5" r="11.5" stroke="#20a020" stroke-width="1" fill="none"/><circle cx="364" cy="422.5" r="12" fill="#10b010"/>
<g font-family="Liberation Sans,sans-serif" font-size="5" fill="#e040e0" text-anchor="middle"><text x="277" y="130" textLength="112">Ordinata in compensato da 1.5 mm</text><text x="277" y="136">2</text><text x="92" y="311" textLength="116">Ordinata in compensato da 1.5 mm</text><text x="92" y="318">2</text><text x="56" y="509" textLength="62" font-size="3.5" fill="#c04080">Ordinata compensato</text></g>
<!-- caselle scrollbar -->
<rect x="378" y="122" width="12" height="451" fill="#fbfbf8"/><path d="M378.5,122V573M389.5,122V573" stroke="#dfe3f0" stroke-width="1"/>
<rect x="379" y="122" width="10" height="15" rx="2" fill="#c6d6fb"/><path d="M380.5,131.5l3.5,-3.5l3.5,3.5" stroke="#4d6185" stroke-width="1.8" fill="none"/>
<rect x="379" y="557" width="10" height="15" rx="2" fill="#c6d6fb"/><path d="M380.5,562.5l3.5,3.5l3.5,-3.5" stroke="#4d6185" stroke-width="1.8" fill="none"/>
<rect x="379" y="460" width="10" height="20" rx="2" fill="#c6d6fb" stroke="#a8bcf0" stroke-width="0.8"/><path d="M381,466.5h6M381,468.5h6M381,470.5h6M381,472.5h6" stroke="#eef4fe" stroke-width="1"/>
<!-- qualifiche scrollbar -->
<rect x="373" y="601" width="16" height="226" fill="#f4f3ee"/>
<rect x="374.5" y="601.5" width="13" height="16" rx="2" fill="#c3d4fc" stroke="#fff" stroke-width="1"/><path d="M377,612l4,-4l4,4" stroke="#4d6185" stroke-width="2" fill="none"/>
<rect x="374.5" y="809.5" width="13" height="16" rx="2" fill="#c3d4fc" stroke="#fff" stroke-width="1"/><path d="M377,815l4,4l4,-4" stroke="#4d6185" stroke-width="2" fill="none"/>
<rect x="374.5" y="619.5" width="13" height="187" rx="2" fill="#c3d4fc" stroke="#fff" stroke-width="1"/><path d="M377.5,709.5h7M377.5,711.5h7M377.5,713.5h7M377.5,715.5h7" stroke="#eef4fe" stroke-width="1"/><path d="M378.5,710.5h7M378.5,712.5h7M378.5,714.5h7M378.5,716.5h7" stroke="#8ca0d8" stroke-width="1"/>
<!-- circles -->
<g fill="#00ee00" stroke="#0a3a0a" stroke-width="0.9">
<circle cx="9" cy="629" r="7.3"/>
<circle cx="21" cy="645" r="7.6"/><circle cx="21" cy="661" r="7.6"/><circle cx="21" cy="677" r="7.6"/><circle cx="21" cy="693" r="7.6"/><circle cx="21" cy="709" r="7.6"/><circle cx="21" cy="725" r="7.6"/><circle cx="21" cy="741" r="7.6"/><circle cx="21" cy="757" r="7.6"/><circle cx="21" cy="773" r="7.6"/><circle cx="21" cy="789" r="7.6"/><circle cx="21" cy="805" r="7.6"/><circle cx="21" cy="821" r="7.6"/>
<circle cx="21" cy="899" r="7.6"/>
</g>
<rect x="1" y="827" width="372" height="8" fill="#ece9d8"/><path d="M0,827.5H390" stroke="#7f9db9"/>
<g fill="#fff" stroke="#222" stroke-width="0.9"><circle cx="9" cy="883" r="7.3"/><circle cx="21" cy="915" r="7.6"/></g>
<!-- color squares -->
<g stroke="#333" stroke-width="1">
<rect x="126.5" y="624.5" width="10" height="10" fill="#c0c0c0"/>
<rect x="126.5" y="640.5" width="10" height="10" fill="#0000e0"/>
<rect x="126.5" y="656.5" width="10" height="10" fill="#ffffff"/>
<rect x="126.5" y="672.5" width="10" height="10" fill="#b0b0b0"/>
<rect x="126.5" y="688.5" width="10" height="10" fill="#80a0ff"/>
<rect x="126.5" y="704.5" width="10" height="10" fill="#e0d870"/>
<rect x="126.5" y="720.5" width="10" height="10" fill="#70a8a8"/>
<rect x="126.5" y="736.5" width="10" height="10" fill="#b0ff90"/>
<rect x="126.5" y="752.5" width="10" height="10" fill="#10a020"/>
<rect x="126.5" y="768.5" width="10" height="10" fill="#908830"/>
<rect x="126.5" y="784.5" width="10" height="10" fill="#ffff80"/>
<rect x="126.5" y="800.5" width="10" height="10" fill="#60a8ff"/>
<rect x="126.5" y="816.5" width="10" height="10" fill="#b0a020"/>
<rect x="80.5" y="878.5" width="10" height="10" fill="#888"/>
<rect x="80.5" y="894.5" width="10" height="10" fill="#888"/>
<rect x="80.5" y="910.5" width="10" height="10" fill="#888"/>
</g>
<rect x="120" y="827" width="30" height="7.5" fill="#ece9d8"/><path d="M0,827.5H390" stroke="#7f9db9"/>
<!-- blue arrow -->
<path d="M150,773L157,766.5V770.5H166V775.5H157V779.5z" fill="#1010d0" stroke="#000060" stroke-width="0.6"/>
</svg>
</div>
<!--/LEFT-->
<div id="canvas">
<!--CV-->
<svg id="cv" class="abs" style="left:0;top:0" width="886" height="867" viewBox="394 99 886 867" fill="none" stroke-linejoin="round">
<g>
<polygon points="395.5,192.8 460.6,190.9 461.9,255 397.8,256.9" fill="#a0d662" stroke="#ffffea" stroke-width="1.6"/>
<polygon points="398.5,195.8 457.8,194 459,252 400.5,253.8" fill="none" stroke="#c8ee9a" stroke-width="1.22"/>
<circle cx="428.1" cy="208.1" r="4.7" fill="#000" stroke="#ffffea" stroke-width="1.59"/>
<circle cx="413.7" cy="223.3" r="4.7" fill="#000" stroke="#ffffea" stroke-width="1.59"/>
<circle cx="428.7" cy="222.8" r="4.7" fill="#000" stroke="#ffffea" stroke-width="1.59"/>
<circle cx="443.7" cy="222.6" r="4.7" fill="#000" stroke="#ffffea" stroke-width="1.59"/>
<circle cx="429" cy="237.8" r="4.7" fill="#000" stroke="#ffffea" stroke-width="1.59"/>
<path d="M397.3,206L398.8,243" stroke="#e23a1a" stroke-width="1.46"/>
<path d="M459.4,204L460.4,240" stroke="#e23a1a" stroke-width="1.46"/>
<path d="M414,254.6L444,253.7" stroke="#e23a1a" stroke-width="1.59"/>
<g fill="#ffe080" fill-opacity="0.7" stroke="#f5a623" stroke-width="1.04"><circle cx="412.7" cy="194.2" r="1.4500000000000002"/><circle cx="442.6" cy="193.3" r="1.4500000000000002"/><circle cx="397.6" cy="209" r="1.4500000000000002"/><circle cx="398.6" cy="238" r="1.4500000000000002"/><circle cx="458.6" cy="206.5" r="1.4500000000000002"/><circle cx="459.6" cy="237" r="1.4500000000000002"/><circle cx="414.3" cy="253.6" r="1.4500000000000002"/><circle cx="444.2" cy="252.8" r="1.4500000000000002"/></g>
<text x="402" y="241" font-family="Liberation Sans,sans-serif" font-size="7.5" fill="#b060c0">y0</text><text x="406" y="250" font-family="Liberation Sans,sans-serif" font-size="7.5" fill="#b060c0">y</text>
<circle cx="416.5" cy="210.5" r="1.2" fill="#e8f8d0"/>
<circle cx="441" cy="209.5" r="1.2" fill="#e8f8d0"/>
<circle cx="416.5" cy="236" r="1.2" fill="#e8f8d0"/>
<circle cx="441.5" cy="235" r="1.2" fill="#e8f8d0"/>
</g>
<g>
<polygon points="470.9,191.6 603.2,177.8 606,182 612.8,190.3 650,198.4 687.8,199.7 725,197 762.8,192.2 800,187.5 837.5,182.8 852.5,181.9 1040,206.3 1272.6,238.2 1272.6,251.6 1173,251.6 1171.5,253.2 472.4,254" fill="#a0d662"/>
<polygon points="482.2,199.2 530.6,194.6 530.6,225 482.2,225" fill="#80be60" stroke="#ffffea" stroke-width="1.83"/>
<polygon points="482.2,233.5 530.6,233.5 530.6,244.7 482.2,244.7" fill="#80be60" stroke="#ffffea" stroke-width="1.83"/>
<polygon points="538.8,193.5 598.5,187.1 598.5,225 538.8,225" fill="#80be60" stroke="#ffffea" stroke-width="1.83"/>
<polygon points="538.8,233.5 598.5,233.5 598.5,244.7 538.8,244.7" fill="#80be60" stroke="#ffffea" stroke-width="1.83"/>
<path d="M607.5,196.5C620,203 640,206 676.5,207V225H607.5z" fill="#80be60" stroke="#ffffea" stroke-width="1.34"/>
<polygon points="607.5,233.5 676.5,233.5 676.5,244.7 607.5,244.7" fill="#80be60" stroke="#ffffea" stroke-width="1.83"/>
<path d="M684,207.3C710,207.5 735,205.5 754,202.5V225H684z" fill="#80be60" stroke="#ffffea" stroke-width="1.34"/>
<polygon points="684,233.5 754,233.5 754,244.7 684,244.7" fill="#80be60" stroke="#ffffea" stroke-width="1.83"/>
<path d="M761.5,201.5C775,199 790,196 800,196C815,197 835,200.5 849,203V225H761.5z" fill="#80be60" stroke="#ffffea" stroke-width="1.34"/>
<polygon points="761.5,233.5 849,233.5 849,244.7 761.5,244.7" fill="#80be60" stroke="#ffffea" stroke-width="1.83"/>
<polygon points="857.2,192.2 917.8,199.2 917.8,225 857.2,225" fill="#80be60" stroke="#ffffea" stroke-width="1.83"/>
<polygon points="857.2,233.5 917.8,233.5 917.8,244.7 857.2,244.7" fill="#80be60" stroke="#ffffea" stroke-width="1.83"/>
<polygon points="924.2,200.3 984.2,207.2 984.2,225 924.2,225" fill="#80be60" stroke="#ffffea" stroke-width="1.83"/>
<polygon points="924.2,233.5 984.2,233.5 984.2,244.7 924.2,244.7" fill="#80be60" stroke="#ffffea" stroke-width="1.83"/>
<polygon points="992.3,209 1051,215.6 1051,225 992.3,225" fill="#80be60" stroke="#ffffea" stroke-width="1.83"/>
<polygon points="992.3,233.5 1051,233.5 1051,244.7 992.3,244.7" fill="#80be60" stroke="#ffffea" stroke-width="1.83"/>
<polygon points="1058.8,218.5 1106.6,225 1058.8,225" fill="#80be60" stroke="#ffffea" stroke-width="1.22"/>
<polygon points="1058.8,233.5 1118.8,233.5 1118.8,244.7 1058.8,244.7" fill="#80be60" stroke="#ffffea" stroke-width="1.83"/>
<polygon points="1127.2,227.9 1179.8,234.4 1179.8,242 1127.2,242" fill="#80be60" stroke="#ffffea" stroke-width="1.34"/>
<path d="M604,186C612,196 630,203.5 650,205.7C670,207.4 700,207.6 725,205.5C760,202 790,193.5 820,188.5L852,183" stroke="#ffffea" stroke-width="1.83"/>
<path d="M474,226L1119,226" stroke="#e4f17e" stroke-width="1.46" stroke-opacity="0.85"/>
<path d="M474,232.6L1119,232.6" stroke="#e4f17e" stroke-width="1.34" stroke-opacity="0.7"/>
<path d="M474,246L1270,246" stroke="#e4f17e" stroke-width="1.46" stroke-opacity="0.85"/>
<path d="M538.8,226L1106,226" stroke="#ffffea" stroke-width="1.34"/>
<path d="M482,232.8L1119,232.8" stroke="#ffffea" stroke-width="1.34"/>
<path d="M857,190.3L1270.8,245.7" stroke="#e4f17e" stroke-width="1.59"/>
<path d="M477,196L477,253" stroke="#e4f17e" stroke-width="1.22"/>
<path d="M482,196L482,253" stroke="#e4f17e" stroke-width="1.22" stroke-opacity="0.6"/>
<path d="M531.9,184.7L531.9,253" stroke="#e4f17e" stroke-width="1.34" stroke-opacity="0.9"/>
<path d="M538,184.1L538,253" stroke="#e4f17e" stroke-width="1.34" stroke-opacity="0.9"/>
<path d="M600.4,177.6L600.4,253" stroke="#e4f17e" stroke-width="1.34" stroke-opacity="0.9"/>
<path d="M678,202.5L678,253" stroke="#e4f17e" stroke-width="1.34" stroke-opacity="0.9"/>
<path d="M683,202.5L683,253" stroke="#e4f17e" stroke-width="1.34" stroke-opacity="0.9"/>
<path d="M755.3,202.5L755.3,253" stroke="#e4f17e" stroke-width="1.34" stroke-opacity="0.9"/>
<path d="M760.6,202.5L760.6,253" stroke="#e4f17e" stroke-width="1.34" stroke-opacity="0.9"/>
<path d="M984.8,198.6L984.8,253" stroke="#e4f17e" stroke-width="1.34" stroke-opacity="0.9"/>
<path d="M991.4,199.5L991.4,253" stroke="#e4f17e" stroke-width="1.34" stroke-opacity="0.9"/>
<path d="M1052.7,207.5L1052.7,253" stroke="#e4f17e" stroke-width="1.34" stroke-opacity="0.9"/>
<path d="M1057.8,208.2L1057.8,253" stroke="#e4f17e" stroke-width="1.34" stroke-opacity="0.9"/>
<path d="M918.6,199L918.6,245" stroke="#ffffea" stroke-width="1.46"/>
<path d="M923.3,199L923.3,245" stroke="#ffffea" stroke-width="1.46"/>
<path d="M850,183L850,253" stroke="#ffffea" stroke-width="1.83"/>
<path d="M855.8,183L855.8,253" stroke="#ffffea" stroke-width="1.83"/>
<path d="M603.2,178L603.2,253" stroke="#ffffea" stroke-width="1.6"/>
<path d="M606.3,186L606.3,253" stroke="#ffffea" stroke-width="1.34"/>
<path d="M1119.4,213.8L1119.4,254" stroke="#ffffea" stroke-width="1.1"/>
<path d="M1126.3,213.8L1126.3,254" stroke="#ffffea" stroke-width="1.1"/>
<path d="M491.5,229.3L518.8,229.3" stroke="#e6f6c0" stroke-width="1.22"/>
<path d="M550.7,229.3L586.3,229.3" stroke="#e6f6c0" stroke-width="1.22"/>
<path d="M619,229.3L664,229.3" stroke="#e6f6c0" stroke-width="1.22"/>
<path d="M697,229.3L741,229.3" stroke="#e6f6c0" stroke-width="1.22"/>
<path d="M819,229.3L843,229.3" stroke="#e6f6c0" stroke-width="1.22"/>
<path d="M868,229.3L905,229.3" stroke="#e6f6c0" stroke-width="1.22"/>
<path d="M1199.5,241.5L1243.6,241.5" stroke="#e6f6c0" stroke-width="1.22"/>
<rect x="1181.6" y="229.7" width="15.1" height="4.7" rx="1.5" fill="#00e000"/>
<path d="M603.2,177.8L470.9,191.6L472.4,254L1171.5,253.2L1173,251.6L1272.6,251.6L1272.6,238.2L1040,206.3L852.5,181.9L836,184.5" stroke="#ffffea" stroke-width="1.8"/>
<path d="M472.4,253.4L1171.5,252.8" stroke="#ffffea" stroke-width="3"/>
<path d="M1172,251.4L1272.6,251.4" stroke="#ffffea" stroke-width="2.6"/>
<path d="M492,252.9L518,252.9" stroke="#e23a1a" stroke-width="1.22"/>
<path d="M551,252.9L586,252.9" stroke="#e23a1a" stroke-width="1.22"/>
<path d="M618,252.6L1170,252.1" stroke="#e23a1a" stroke-width="0.98"/>
<path d="M1173,250.8L1280,250.6" stroke="#e23a1a" stroke-width="0.98"/>
<path d="M475,200L476.2,250" stroke="#b05020" stroke-width="1.46"/>
<path d="M492,190.3L518,187.6" stroke="#e23a1a" stroke-width="1.22"/>
<path d="M551,184.2L586,180.6" stroke="#e23a1a" stroke-width="1.22"/>
<path d="M870,184.8L1271,238.5" stroke="#e23a1a" stroke-width="1.22" stroke-opacity="0.8"/>
<path d="M804,194.5L848,201" stroke="#e23a1a" stroke-width="1.59"/>
<g fill="#ffe080" fill-opacity="0.7" stroke="#f5a623" stroke-width="1.04"><circle cx="491.5" cy="190" r="1.4500000000000002"/><circle cx="518" cy="187.3" r="1.4500000000000002"/><circle cx="551" cy="183.8" r="1.4500000000000002"/><circle cx="586" cy="180.2" r="1.4500000000000002"/><circle cx="869.4" cy="184.3" r="1.4500000000000002"/><circle cx="904" cy="188.8" r="1.4500000000000002"/><circle cx="937" cy="193.2" r="1.4500000000000002"/><circle cx="971.7" cy="197.8" r="1.4500000000000002"/><circle cx="1004.5" cy="202" r="1.4500000000000002"/><circle cx="1071.9" cy="210.8" r="1.4500000000000002"/><circle cx="1107" cy="215.5" r="1.4500000000000002"/><circle cx="1138.9" cy="219.8" r="1.4500000000000002"/><circle cx="1172.3" cy="224.4" r="1.4500000000000002"/><circle cx="1198.5" cy="228" r="1.4500000000000002"/><circle cx="1244.5" cy="234.3" r="1.4500000000000002"/><circle cx="491.5" cy="253.3" r="1.4500000000000002"/><circle cx="518" cy="253.3" r="1.4500000000000002"/><circle cx="551" cy="253.3" r="1.4500000000000002"/><circle cx="586" cy="253.3" r="1.4500000000000002"/><circle cx="618.4" cy="253.2" r="1.4500000000000002"/><circle cx="664.4" cy="253.2" r="1.4500000000000002"/><circle cx="696.8" cy="253.2" r="1.4500000000000002"/><circle cx="741.7" cy="253.2" r="1.4500000000000002"/><circle cx="774" cy="253.2" r="1.4500000000000002"/><circle cx="837" cy="253" r="1.4500000000000002"/><circle cx="869.8" cy="253" r="1.4500000000000002"/><circle cx="904.5" cy="253" r="1.4500000000000002"/><circle cx="937" cy="253" r="1.4500000000000002"/><circle cx="971.7" cy="253" r="1.4500000000000002"/><circle cx="1004.5" cy="253" r="1.4500000000000002"/><circle cx="1039" cy="253" r="1.4500000000000002"/><circle cx="1071.9" cy="253" r="1.4500000000000002"/><circle cx="1107" cy="253" r="1.4500000000000002"/><circle cx="1138.9" cy="253" r="1.4500000000000002"/><circle cx="1172.3" cy="250.7" r="1.4500000000000002"/><circle cx="1198.5" cy="251.3" r="1.4500000000000002"/><circle cx="1244.5" cy="251.3" r="1.4500000000000002"/><circle cx="473.5" cy="207.5" r="1.4500000000000002"/><circle cx="474.3" cy="236" r="1.4500000000000002"/></g>
<path d="M608,181L613,177C625,170 640,165.5 655,163.8C670,162.6 690,162.6 714,163V166.5H723.4V164C760,167 800,173.5 837.5,179.5V182.8C800,187.5 765,192 725,197.2V194.6H716V198C700,199.6 670,199.8 650,198.4C632,196.5 618,193 612.8,188z" fill="#78781f" stroke="#ffffea" stroke-width="1.7"/>
<path d="M608,181L612,184.5" stroke="#000" stroke-width="2"/>
<rect x="644.6" y="168.8" width="28.2" height="9" rx="1" fill="#000" stroke="#ffffea" stroke-width="1.59"/>
<rect x="644.6" y="185.6" width="28.2" height="9" rx="1" fill="#000" stroke="#ffffea" stroke-width="1.59"/>
<path d="M645,186.5V194" stroke="#80c8f0" stroke-width="1.46"/>
<circle cx="697.2" cy="181.5" r="5.2" fill="#000" stroke="#ffffea" stroke-width="1.59"/>
<ellipse cx="735" cy="173.8" rx="10.3" ry="3.7" fill="#000" stroke="#ffffea" stroke-width="1.59"/>
<ellipse cx="735" cy="189.8" rx="10.3" ry="3.7" fill="#000" stroke="#ffffea" stroke-width="1.59"/>
<ellipse cx="767.5" cy="175.3" rx="7.9" ry="2.8" fill="#000" stroke="#ffffea" stroke-width="1.59"/>
<ellipse cx="767.5" cy="187.9" rx="7.9" ry="2.8" fill="#000" stroke="#ffffea" stroke-width="1.59"/>
<path d="M680.3,163L680.3,181" stroke="#ffffea" stroke-width="1.22"/>
<path d="M757.2,170L757.2,181" stroke="#ffffea" stroke-width="1.22"/>
<path d="M613,181.5L638,181.5" stroke="#c8c890" stroke-width="1.1"/>
<path d="M787,181.5L834,181.5" stroke="#c8c890" stroke-width="1.1"/>
<text x="682" y="175" font-family="Liberation Sans,sans-serif" font-size="6" fill="#c050c0">C 2</text>
</g>
<g>
<polygon points="603.4,316 603.4,314.8 851.9,279.7 851.9,317 745.6,317 745.6,322.5 691.3,322.5 691.3,317.7 604,317.7" fill="#78781f" stroke="#ffffea" stroke-width="1.71"/>
<text x="748" y="301" font-family="Liberation Sans,sans-serif" font-size="4.5" fill="#c050c0" fill-opacity="0.75" textLength="80">Ordinata comp. 1.5 2</text>
<rect x="544" y="317.7" width="36" height="524.3" rx="0" fill="#78781f" stroke="#ffffea" stroke-width="1.59"/>
<ellipse cx="552.2" cy="365.7" rx="3.9" ry="42.3" fill="#000" stroke="#ffffea" stroke-width="1.34"/>
<ellipse cx="571.9" cy="365.7" rx="3.9" ry="42.3" fill="#000" stroke="#ffffea" stroke-width="1.34"/>
<ellipse cx="552.2" cy="463.7" rx="3.9" ry="42.3" fill="#000" stroke="#ffffea" stroke-width="1.34"/>
<ellipse cx="571.9" cy="463.7" rx="3.9" ry="42.3" fill="#000" stroke="#ffffea" stroke-width="1.34"/>
<ellipse cx="552.2" cy="546.2" rx="3.9" ry="28.2" fill="#000" stroke="#ffffea" stroke-width="1.34"/>
<ellipse cx="571.9" cy="546.2" rx="3.9" ry="28.2" fill="#000" stroke="#ffffea" stroke-width="1.34"/>
<ellipse cx="552.2" cy="595.4" rx="3.9" ry="10.4" fill="#000" stroke="#ffffea" stroke-width="1.34"/>
<ellipse cx="571.9" cy="595.4" rx="3.9" ry="10.4" fill="#000" stroke="#ffffea" stroke-width="1.34"/>
<ellipse cx="552.2" cy="657.5" rx="3.9" ry="41.5" fill="#000" stroke="#ffffea" stroke-width="1.34"/>
<ellipse cx="571.9" cy="657.5" rx="3.9" ry="41.5" fill="#000" stroke="#ffffea" stroke-width="1.34"/>
<ellipse cx="552.2" cy="754.8" rx="3.9" ry="42.2" fill="#000" stroke="#ffffea" stroke-width="1.34"/>
<ellipse cx="571.9" cy="754.8" rx="3.9" ry="42.2" fill="#000" stroke="#ffffea" stroke-width="1.34"/>
<ellipse cx="552.2" cy="823.7" rx="3.4" ry="12.5" fill="none" stroke="#ffffea" stroke-width="1.34"/>
<ellipse cx="571.9" cy="823.7" rx="3.4" ry="12.5" fill="none" stroke="#ffffea" stroke-width="1.34"/>
<path d="M544.5,414L561.5,414" stroke="#d8d8a0" stroke-width="1.22"/>
<path d="M544.5,511L561.5,511" stroke="#d8d8a0" stroke-width="1.22"/>
<path d="M544.5,582L561.5,582" stroke="#d8d8a0" stroke-width="1.22"/>
<path d="M544.5,608.7L561.5,608.7" stroke="#d8d8a0" stroke-width="1.22"/>
<path d="M544.5,706.7L561.5,706.7" stroke="#d8d8a0" stroke-width="1.22"/>
<path d="M562.8,318L562.8,841" stroke="#e23a1a" stroke-width="1.46"/>
<path d="M561.3,342L561.3,390" stroke="#e0b090" stroke-width="1.22"/>
<path d="M561.3,440L561.3,487" stroke="#e0b090" stroke-width="1.22"/>
<path d="M561.3,535L561.3,560" stroke="#e0b090" stroke-width="1.22"/>
<path d="M561.3,630L561.3,680" stroke="#e0b090" stroke-width="1.22"/>
<path d="M561.3,730L561.3,780" stroke="#e0b090" stroke-width="1.22"/>
<g fill="#ffe080" fill-opacity="0.7" stroke="#f5a623" stroke-width="1.04"><circle cx="551.9" cy="317.7" r="1.4500000000000002"/><circle cx="571.9" cy="317.7" r="1.4500000000000002"/></g>
<path d="M612.8,318.4H680.8V856H679.8" stroke="none" fill="none"/>
<rect x="612.8" y="318.4" width="68" height="486.2" rx="0" fill="#78781f"/>
<rect x="619.9" y="322.9" width="53.8" height="87.6" rx="2" fill="#000" stroke="#ffffea" stroke-width="1.46"/>
<rect x="619.9" y="417.6" width="53.8" height="89.9" rx="2" fill="#000" stroke="#ffffea" stroke-width="1.46"/>
<rect x="619.9" y="515" width="53.8" height="63.4" rx="2" fill="#000" stroke="#ffffea" stroke-width="1.46"/>
<rect x="619.9" y="585.5" width="53.8" height="19.6" rx="2" fill="#000" stroke="#ffffea" stroke-width="1.46"/>
<rect x="619.9" y="612.5" width="53.8" height="90.3" rx="2" fill="#000" stroke="#ffffea" stroke-width="1.46"/>
<rect x="619.9" y="709.6" width="53.8" height="90.7" rx="2" fill="#000" stroke="#ffffea" stroke-width="1.46"/>
<path d="M612.8,318.4L612.8,841.7" stroke="#ffffea" stroke-width="1.59"/>
<path d="M680.3,318.4L680.3,856" stroke="#ffffea" stroke-width="1.59"/>
<path d="M612.8,318.4L680.8,318.4" stroke="#ffffea" stroke-width="1.59"/>
<path d="M681.6,342.7L681.6,388" stroke="#ffffea" stroke-width="1.22"/>
<path d="M681.6,440L681.6,486" stroke="#ffffea" stroke-width="1.22"/>
<path d="M681.6,535L681.6,560" stroke="#ffffea" stroke-width="1.22"/>
<path d="M681.6,630L681.6,680" stroke="#ffffea" stroke-width="1.22"/>
<path d="M681.6,728L681.6,778" stroke="#ffffea" stroke-width="1.22"/>
<path d="M638,414L679,414" stroke="#d8d8a0" stroke-width="1.22"/>
<path d="M638,511L679,511" stroke="#d8d8a0" stroke-width="1.22"/>
<path d="M638,582L679,582" stroke="#d8d8a0" stroke-width="1.22"/>
<path d="M638,608.7L679,608.7" stroke="#d8d8a0" stroke-width="1.22"/>
<path d="M638,706.7L679,706.7" stroke="#d8d8a0" stroke-width="1.22"/>
<rect x="758.1" y="318.4" width="57.1" height="486.2" rx="0" fill="#78781f"/>
<rect x="819.8" y="320" width="32.1" height="482" rx="0" fill="#78781f"/>
<rect x="764.6" y="324.3" width="44.3" height="27.2" rx="2" fill="#000" stroke="#ffffea" stroke-width="1.46"/>
<rect x="764.6" y="357.6" width="32.4" height="15.7" rx="2" fill="#000" stroke="#ffffea" stroke-width="1.46"/>
<rect x="764.6" y="379.3" width="44.3" height="30.7" rx="2" fill="#000" stroke="#ffffea" stroke-width="1.46"/>
<rect x="764.6" y="417.6" width="44.3" height="89.9" rx="2" fill="#000" stroke="#ffffea" stroke-width="1.46"/>
<rect x="764.6" y="515" width="44.3" height="17.8" rx="2" fill="#000" stroke="#ffffea" stroke-width="1.46"/>
<rect x="764.6" y="538.9" width="32.4" height="16.3" rx="2" fill="#000" stroke="#ffffea" stroke-width="1.46"/>
<rect x="764.6" y="560.6" width="44.3" height="17.8" rx="2" fill="#000" stroke="#ffffea" stroke-width="1.46"/>
<rect x="764.6" y="585.5" width="44.3" height="19.6" rx="2" fill="#000" stroke="#ffffea" stroke-width="1.46"/>
<rect x="764.6" y="612.5" width="44.3" height="90.3" rx="2" fill="#000" stroke="#ffffea" stroke-width="1.46"/>
<rect x="764.6" y="709.6" width="44.3" height="32.7" rx="2" fill="#000" stroke="#ffffea" stroke-width="1.46"/>
<rect x="764.6" y="746.7" width="32.4" height="16.3" rx="2" fill="#000" stroke="#ffffea" stroke-width="1.46"/>
<rect x="764.6" y="769" width="44.3" height="31.3" rx="2" fill="#000" stroke="#ffffea" stroke-width="1.46"/>
<rect x="825.6" y="327" width="20.4" height="24.6" rx="1.5" fill="#000" stroke="#ffffea" stroke-width="1.46"/>
<rect x="825.6" y="379.3" width="20.4" height="30.7" rx="1.5" fill="#000" stroke="#ffffea" stroke-width="1.46"/>
<rect x="825.6" y="417.6" width="20.4" height="89.9" rx="1.5" fill="#000" stroke="#ffffea" stroke-width="1.46"/>
<rect x="825.6" y="515" width="20.4" height="17.8" rx="1.5" fill="#000" stroke="#ffffea" stroke-width="1.46"/>
<rect x="825.6" y="560.6" width="20.4" height="15.4" rx="1.5" fill="#000" stroke="#ffffea" stroke-width="1.46"/>
<rect x="825.6" y="588.5" width="20.4" height="16.6" rx="1.5" fill="#000" stroke="#ffffea" stroke-width="1.46"/>
<rect x="825.6" y="612.5" width="20.4" height="90.3" rx="1.5" fill="#000" stroke="#ffffea" stroke-width="1.46"/>
<rect x="825.6" y="709.6" width="20.4" height="32.7" rx="1.5" fill="#000" stroke="#ffffea" stroke-width="1.46"/>
<rect x="825.6" y="769" width="20.4" height="25.5" rx="1.5" fill="#000" stroke="#ffffea" stroke-width="1.46"/>
<rect x="802.4" y="357.3" width="29.9" height="16" rx="0.5" fill="#000" stroke="#ffffea" stroke-width="1.46"/>
<rect x="802.4" y="538.9" width="29.9" height="16.3" rx="0.5" fill="#000" stroke="#ffffea" stroke-width="1.46"/>
<rect x="802.4" y="746.7" width="29.9" height="16.3" rx="0.5" fill="#000" stroke="#ffffea" stroke-width="1.46"/>
<rect x="815.2" y="317.5" width="4.6" height="487" fill="#000"/>
<path d="M815.2,318.4L815.2,804" stroke="#ffffea" stroke-width="1.34"/>
<path d="M819.8,320L819.8,802" stroke="#ffffea" stroke-width="1.34"/>
<rect x="812" y="357.9" width="11" height="14.8" fill="#000"/>
<rect x="812" y="539.5" width="11" height="15.1" fill="#000"/>
<rect x="812" y="747.3" width="11" height="15.1" fill="#000"/>
<path d="M758.1,318.4L758.1,804.6" stroke="#ffffea" stroke-width="1.59"/>
<path d="M758.1,318.4L815.2,318.4" stroke="#ffffea" stroke-width="1.59"/>
<path d="M819.8,320L851.9,320" stroke="#ffffea" stroke-width="1.46"/>
<path d="M851.9,317L851.9,802" stroke="#ffffea" stroke-width="1.59"/>
<path d="M815,802L851.9,802" stroke="#ffffea" stroke-width="1.46"/>
<path d="M757.2,342.7L757.2,388" stroke="#ffffea" stroke-width="1.22"/>
<path d="M757.2,440L757.2,486" stroke="#ffffea" stroke-width="1.22"/>
<path d="M757.2,535L757.2,560" stroke="#ffffea" stroke-width="1.22"/>
<path d="M757.2,630L757.2,680" stroke="#ffffea" stroke-width="1.22"/>
<path d="M757.2,728L757.2,778" stroke="#ffffea" stroke-width="1.22"/>
<path d="M753.4,414L787,414" stroke="#e8e8c0" stroke-width="1.22"/>
<path d="M753.4,511L787,511" stroke="#e8e8c0" stroke-width="1.22"/>
<path d="M753.4,582L787,582" stroke="#e8e8c0" stroke-width="1.22"/>
<path d="M753.4,608.7L787,608.7" stroke="#e8e8c0" stroke-width="1.22"/>
<path d="M753.4,706.7L787,706.7" stroke="#e8e8c0" stroke-width="1.22"/>
<g fill="#ffe080" fill-opacity="0.7" stroke="#f5a623" stroke-width="1.04"><circle cx="766.7" cy="318.3" r="1.35"/><circle cx="778.4" cy="318.3" r="1.35"/><circle cx="789" cy="320.8" r="1.35"/><circle cx="805.5" cy="320.8" r="1.35"/><circle cx="814.4" cy="341.9" r="1.35"/><circle cx="814.4" cy="389.5" r="1.35"/><circle cx="814.4" cy="438.5" r="1.35"/><circle cx="814.4" cy="487" r="1.35"/><circle cx="814.4" cy="523.5" r="1.35"/><circle cx="814.4" cy="568.6" r="1.35"/><circle cx="814.4" cy="588" r="1.35"/><circle cx="814.4" cy="602.7" r="1.35"/><circle cx="814.4" cy="633.3" r="1.35"/><circle cx="814.4" cy="682" r="1.35"/><circle cx="814.4" cy="731" r="1.35"/><circle cx="814.4" cy="778.8" r="1.35"/><circle cx="828.2" cy="578.4" r="1.35"/><circle cx="836.8" cy="585" r="1.35"/></g>
<path d="M770,319.6L805,319.6" stroke="#f0d060" stroke-width="1.22"/>
<path d="M798,556.5L823,556.5" stroke="#c8c830" stroke-width="1.1"/>
<path d="M798,765L823,765" stroke="#c8c830" stroke-width="1.1"/>
<path d="M821,533.8L838,533.8" stroke="#c8c830" stroke-width="1.1"/>
<path d="M821,741L838,741" stroke="#c8c830" stroke-width="1.1"/>
<rect x="870.6" y="318.8" width="10.9" height="484.2" rx="1" fill="#78781f" stroke="#ffffea" stroke-width="1.59"/>
<path d="M876,342.7L876,388.7" stroke="#c8c878" stroke-width="1.34"/>
<path d="M876,440L876,487" stroke="#c8c878" stroke-width="1.34"/>
<path d="M876,536L876,562" stroke="#c8c878" stroke-width="1.34"/>
<path d="M876,589L876,602" stroke="#c8c878" stroke-width="1.34"/>
<path d="M876,634L876,680" stroke="#c8c878" stroke-width="1.34"/>
<path d="M876,731L876,779" stroke="#c8c878" stroke-width="1.34"/>
<text x="873.5" y="710" font-family="Liberation Sans,sans-serif" font-size="5" fill="#e040e0">01</text><text x="874.5" y="722" font-family="Liberation Sans,sans-serif" font-size="4" fill="#a040a0">2</text>
</g>
<g>
<polygon points="851.7,803.4 1270,834.1 1270,839.2 1262,839.6 1262,845.4 1270,845.8 1270,850.5 851.7,880.8" fill="#a0d662"/>
<polygon points="858,814.7 917.3,818.6 917.3,865.8 858,869.7" fill="#80be60" stroke="#80be60" stroke-width="2.4" stroke-linejoin="round"/>
<polygon points="857.4,814.1 917.9,818 917.9,866.4 857.4,870.3" fill="none" stroke="#f0f050" stroke-width="1.46" stroke-linejoin="round"/>
<polygon points="925.6,819.6 984,823.5 984,861 925.6,864.8" fill="#80be60" stroke="#80be60" stroke-width="2.4" stroke-linejoin="round"/>
<polygon points="925,819 984.6,822.9 984.6,861.6 925,865.4" fill="none" stroke="#f0f050" stroke-width="1.46" stroke-linejoin="round"/>
<polygon points="992.9,824.6 1050.3,828.4 1050.3,856.2 992.9,860" fill="#80be60" stroke="#80be60" stroke-width="2.4" stroke-linejoin="round"/>
<polygon points="992.3,824 1050.9,827.8 1050.9,856.8 992.3,860.6" fill="none" stroke="#f0f050" stroke-width="1.46" stroke-linejoin="round"/>
<polygon points="1060.2,829.5 1119.2,833.4 1119.2,851.2 1060.2,855.1" fill="#80be60" stroke="#80be60" stroke-width="2.4" stroke-linejoin="round"/>
<polygon points="1059.6,828.9 1119.8,832.8 1119.8,851.8 1059.6,855.7" fill="none" stroke="#f0f050" stroke-width="1.46" stroke-linejoin="round"/>
<polygon points="1127.4,834.4 1166.8,836.9 1166.8,847.8 1127.4,850.2" fill="#80be60" stroke="#80be60" stroke-width="2.4" stroke-linejoin="round"/>
<polygon points="1126.8,833.8 1167.4,836.3 1167.4,848.4 1126.8,850.8" fill="none" stroke="#f0f050" stroke-width="1.46" stroke-linejoin="round"/>
<path d="M853,811.8L1255,837.5" stroke="#f0f050" stroke-width="1.34" stroke-opacity="0.9"/>
<path d="M853,872.4L1255,847.1" stroke="#f0f050" stroke-width="1.34" stroke-opacity="0.9"/>
<path d="M857.2,806.8L857.2,877.4" stroke="#f0f050" stroke-width="1.22" stroke-opacity="0.8"/>
<path d="M918.1,811.3L918.1,873" stroke="#f0f050" stroke-width="1.22" stroke-opacity="0.8"/>
<path d="M924.4,811.7L924.4,872.5" stroke="#f0f050" stroke-width="1.22" stroke-opacity="0.8"/>
<path d="M986.3,816.3L986.3,868.1" stroke="#f0f050" stroke-width="1.22" stroke-opacity="0.8"/>
<path d="M990.6,816.6L990.6,867.7" stroke="#f0f050" stroke-width="1.22" stroke-opacity="0.8"/>
<path d="M1053.6,821.2L1053.6,863.2" stroke="#f0f050" stroke-width="1.22" stroke-opacity="0.8"/>
<path d="M1057.4,821.5L1057.4,862.9" stroke="#f0f050" stroke-width="1.22" stroke-opacity="0.8"/>
<path d="M1122.5,826.3L1122.5,858.2" stroke="#f0f050" stroke-width="1.22" stroke-opacity="0.8"/>
<path d="M1171.7,827.9L1171.7,856.6" stroke="#ffffea" stroke-width="1.46"/>
<path d="M1183.2,828.7L1183.2,855.8" stroke="#ffffea" stroke-width="1.46"/>
<path d="M1146,826L1146,858.5" stroke="#e6f6c0" stroke-width="1.22"/>
<path d="M1152,826.4L1152,858" stroke="#e6f6c0" stroke-width="1.22"/>
<rect x="1135.6" y="840.2" width="31.2" height="4.4" rx="1" fill="#000" stroke="#ffffea" stroke-width="1.59"/>
<path d="M1194.5,842.3C1198,838.5 1203,836.8 1210,837L1262,840.8V844L1210,848C1203,848 1198,846 1194.5,842.3z" fill="none" stroke="#ffffea" stroke-width="1.46"/>
<path d="M1172,842.3L1192,842.3" stroke="#e6f6c0" stroke-width="0.98"/>
<circle cx="1176.5" cy="842.3" r="1.3" stroke="#ffffea" stroke-width="0.98"/><circle cx="1187" cy="842.3" r="1.3" stroke="#ffffea" stroke-width="0.98"/>
<polyline points="851.7,803.4 1270,834.1 1270,839.2 1262,839.6 1262,845.4 1270,845.8 1270,850.5 851.7,880.8" stroke="#ffffea" stroke-width="1.7" fill="none"/>
<path d="M853,804.8L1268,835.3" stroke="#e23a1a" stroke-width="1.22" stroke-opacity="0.85"/>
<path d="M853,879.4L1268,849.3" stroke="#e23a1a" stroke-width="1.22" stroke-opacity="0.85"/>
<g fill="#ffe080" fill-opacity="0.7" stroke="#f5a623" stroke-width="1.04"><circle cx="871.5" cy="805.7" r="1.35"/><circle cx="904.3" cy="808.1" r="1.35"/><circle cx="938" cy="810.5" r="1.35"/><circle cx="971.6" cy="813" r="1.35"/><circle cx="1005.4" cy="815.5" r="1.35"/><circle cx="1037.8" cy="817.9" r="1.35"/><circle cx="1073.3" cy="820.5" r="1.35"/><circle cx="1105.4" cy="822.8" r="1.35"/><circle cx="1140.5" cy="825.4" r="1.35"/><circle cx="1198" cy="829.6" r="1.35"/><circle cx="1243.9" cy="833" r="1.35"/><circle cx="871.5" cy="878.6" r="1.35"/><circle cx="904.3" cy="876.2" r="1.35"/><circle cx="938" cy="873.7" r="1.35"/><circle cx="971.6" cy="871.3" r="1.35"/><circle cx="1005.4" cy="868.9" r="1.35"/><circle cx="1037.8" cy="866.5" r="1.35"/><circle cx="1073.3" cy="863.9" r="1.35"/><circle cx="1105.4" cy="861.6" r="1.35"/><circle cx="1140.5" cy="859.1" r="1.35"/><circle cx="1198" cy="854.9" r="1.35"/><circle cx="1243.9" cy="851.6" r="1.35"/></g>
<rect x="603.8" y="805" width="247.9" height="74.5" rx="0" fill="#86862a"/>
<rect x="649" y="813.6" width="26.6" height="24.2" rx="1" fill="#000"/>
<rect x="649" y="843.3" width="26.6" height="28.1" rx="1" fill="#000"/>
<rect x="684.5" y="813.6" width="17.2" height="57.8" rx="1.5" fill="#000" stroke="#ffffea" stroke-width="1.22"/>
<rect x="715" y="815.2" width="26.3" height="12.9" rx="0.5" fill="#000" stroke="#ffffea" stroke-width="1.46"/>
<rect x="715" y="857.3" width="26.3" height="13" rx="0.5" fill="#000" stroke="#ffffea" stroke-width="1.46"/>
<ellipse cx="728.3" cy="842.5" rx="21.1" ry="8.6" fill="#000" stroke="#ffffea" stroke-width="1.71"/>
<path d="M764.7,808H809.5V838H771C767,838 764.7,835 764.7,831z" fill="#000" stroke="#ffffea" stroke-width="1.46"/>
<rect x="761.9" y="843.3" width="52.3" height="28.1" rx="1" fill="#000"/>
<rect x="844.7" y="842.5" width="5.3" height="28.9" rx="0" fill="#000"/>
<rect x="632.2" y="813.6" width="43.4" height="57.8" rx="4" fill="none" stroke="#ffffea" stroke-width="1.46"/>
<path d="M632,842.3L676,842.3" stroke="#ffffea" stroke-width="1.34"/>
<path d="M649,813.6L649,871.4" stroke="#ffffea" stroke-width="1.22"/>
<path d="M619.7,805V834C619.7,837 621,838 624,838H674.4V808H619.7" stroke="#ffffea" stroke-width="1.34" fill="none"/>
<path d="M612.8,805L612.8,841.7" stroke="#ffffea" stroke-width="1.46"/>
<path d="M612.8,841.7L632,841.7" stroke="#ffffea" stroke-width="1.34"/>
<path d="M679.8,805L679.8,856.5" stroke="#ffffea" stroke-width="1.46"/>
<path d="M761,842.2L850,842.2" stroke="#ffffea" stroke-width="1.46"/>
<path d="M815,805L815,880" stroke="#ffffea" stroke-width="1.46"/>
<path d="M835.3,805L835.3,880" stroke="#ffffea" stroke-width="1.46"/>
<path d="M840,805L840,880" stroke="#f0f050" stroke-width="1.46"/>
<path d="M844,805L844,880" stroke="#ffffea" stroke-width="1.46"/>
<path d="M605,812.8L852,812.8" stroke="#f0f050" stroke-width="1.59"/>
<path d="M605,872.2L852,872.2" stroke="#f0f050" stroke-width="1.59"/>
<path d="M648.6,807L648.6,878" stroke="#f0f050" stroke-width="1.34"/>
<path d="M702.5,813L702.5,872" stroke="#f0f050" stroke-width="1.34"/>
<rect x="618.6" y="829.2" width="3.1" height="12.5" rx="0.5" fill="#e06848" stroke="#ffb090" stroke-width="0.73"/>
<path d="M626,842l3,-3l3,3l3,-2l4,5M627,846h6" stroke="#d040d0" stroke-width="1.1" fill="none"/>
<path d="M610.7,834.7h4M612.7,832.7v4M611.3,833.3l2.8,2.8M614.1,833.3l-2.8,2.8" stroke="#fff8d0" stroke-width="0.98"/>
<path d="M610.7,851h4M612.7,849v4M611.3,849.6l2.8,2.8M614.1,849.6l-2.8,2.8" stroke="#fff8d0" stroke-width="0.98"/>
<path d="M610.7,872.2h4M612.7,870.2v4M611.3,870.8l2.8,2.8M614.1,870.8l-2.8,2.8" stroke="#fff8d0" stroke-width="0.98"/>
<ellipse cx="829.4" cy="822.5" rx="3.8" ry="2.5" stroke="#ffffea" stroke-width="1.46"/><ellipse cx="828.3" cy="862.8" rx="2.8" ry="2.5" stroke="#ffffea" stroke-width="1.46"/>
<circle cx="828.3" cy="837" r="1.3" fill="#c040c0"/><circle cx="828.3" cy="847.2" r="1" fill="#a040a0"/>
<path d="M604,805L851.7,803.6" stroke="#ffffea" stroke-width="2.4"/>
<path d="M604,879.6L851.7,880.6" stroke="#ffffea" stroke-width="2.4"/>
<path d="M640,806.4L851,805.4" stroke="#f06030" stroke-width="1.46" stroke-opacity="0.95"/>
<path d="M640,878.4L851,879.2" stroke="#f06030" stroke-width="1.46" stroke-opacity="0.95"/>
<path d="M851.7,803.4L851.7,880.8" stroke="#ffffea" stroke-width="1.6"/>
<g fill="#ffe080" fill-opacity="0.7" stroke="#f5a623" stroke-width="1.04"><circle cx="619.4" cy="805" r="1.4500000000000002"/><circle cx="663.8" cy="805" r="1.4500000000000002"/><circle cx="697.5" cy="805" r="1.4500000000000002"/><circle cx="741.3" cy="805" r="1.4500000000000002"/><circle cx="775.2" cy="804.7" r="1.4500000000000002"/><circle cx="818.6" cy="805" r="1.4500000000000002"/><circle cx="836.9" cy="805" r="1.4500000000000002"/><circle cx="619.4" cy="880" r="1.4500000000000002"/><circle cx="663.8" cy="880" r="1.4500000000000002"/><circle cx="697.5" cy="880" r="1.4500000000000002"/><circle cx="741.3" cy="880" r="1.4500000000000002"/><circle cx="775.2" cy="880" r="1.4500000000000002"/><circle cx="818.6" cy="880" r="1.4500000000000002"/><circle cx="836.9" cy="880" r="1.4500000000000002"/><circle cx="715" cy="814.7" r="1.4500000000000002"/><circle cx="741.3" cy="814.7" r="1.4500000000000002"/><circle cx="715" cy="828.4" r="1.4500000000000002"/><circle cx="741.3" cy="828.4" r="1.4500000000000002"/><circle cx="715" cy="856.9" r="1.4500000000000002"/><circle cx="741.3" cy="856.9" r="1.4500000000000002"/><circle cx="715" cy="870.5" r="1.4500000000000002"/><circle cx="741.3" cy="870.5" r="1.4500000000000002"/><circle cx="767.3" cy="841.7" r="1.4500000000000002"/><circle cx="806" cy="841.7" r="1.4500000000000002"/><circle cx="827.2" cy="841.7" r="1.4500000000000002"/><circle cx="836.9" cy="841.7" r="1.4500000000000002"/><circle cx="835.6" cy="827.7" r="1.4500000000000002"/><circle cx="835.6" cy="857.3" r="1.4500000000000002"/></g>
<polygon points="470.9,811.3 603.8,804.2 603.8,880.8 470.9,873" fill="#70a8a0"/>
<polygon points="480.3,819 597.5,813.6 597.5,873 480.3,865.2" fill="#9c9c3e"/>
<path d="M544,805L544,841.7" stroke="#ffffea" stroke-width="1.46"/>
<path d="M580,805L580,841.7" stroke="#ffffea" stroke-width="1.46"/>
<path d="M544,841.7L580,841.7" stroke="#ffffea" stroke-width="1.59"/>
<ellipse cx="552.2" cy="823.7" rx="3.4" ry="12.5" fill="none" stroke="#ffffea" stroke-width="1.34"/>
<ellipse cx="571.9" cy="823.7" rx="3.4" ry="12.5" fill="none" stroke="#ffffea" stroke-width="1.34"/>
<path d="M562.8,800L562.8,840" stroke="#e23a1a" stroke-width="1.46"/>
<rect x="483.4" y="832.3" width="46.9" height="21.1" rx="4" fill="#86862a" stroke="#ffffea" stroke-width="1.34"/>
<rect x="493.6" y="819.8" width="36.7" height="4.2" rx="1.5" fill="#86862a" stroke="#ffffea" stroke-width="1.1"/>
<rect x="493.6" y="861.3" width="36.7" height="4.7" rx="1.5" fill="#86862a" stroke="#ffffea" stroke-width="1.1"/>
<path d="M543,832.3C541,832.3 539.7,833.5 539.7,836V850C539.7,852.5 541,853.4 543,853.4H589C591.5,853.4 592.8,852 592.8,850V848.5A6,6 0 0 1 592.8,836.5V836C592.8,833.5 591.5,832.3 589,832.3H581V842H543.5V832.3" stroke="#ffffea" stroke-width="1.34" fill="#86862a"/>
<path d="M592.8,836.5A6,6 0 0 0 592.8,848.5z" fill="#000"/>
<rect x="539.7" y="861.3" width="39.1" height="8.2" rx="1.5" fill="#86862a" stroke="#ffffea" stroke-width="1.1"/>
<rect x="580.5" y="861.3" width="13.5" height="10.7" rx="2" fill="none" stroke="#ffffea" stroke-width="1.1"/>
<rect x="582" y="815" width="12" height="11" rx="2" fill="none" stroke="#ffffea" stroke-width="1.1"/>
<path d="M534.6,827L534.6,857" stroke="#e8e8c0" stroke-width="1.6"/>
<circle cx="485.8" cy="822.2" r="1.8" stroke="#ffffea" stroke-width="1.34" fill="#60601a"/>
<circle cx="485.8" cy="862.8" r="1.8" stroke="#ffffea" stroke-width="1.34" fill="#60601a"/>
<circle cx="589.4" cy="817.5" r="1.8" stroke="#ffffea" stroke-width="1.34" fill="#60601a"/>
<circle cx="589.4" cy="868.3" r="1.8" stroke="#ffffea" stroke-width="1.34" fill="#60601a"/>
<path d="M481,825.3L598,825.3" stroke="#f0f050" stroke-width="1.46" stroke-opacity="0.9"/>
<path d="M481,831.5L598,831.5" stroke="#f0f050" stroke-width="1.46" stroke-opacity="0.9"/>
<path d="M481,854.7L598,854.7" stroke="#f0f050" stroke-width="1.46" stroke-opacity="0.9"/>
<path d="M481,860.5L598,860.5" stroke="#f0f050" stroke-width="1.46" stroke-opacity="0.9"/>
<path d="M481,818L481,866" stroke="#f0f050" stroke-width="1.34"/>
<path d="M493,820L493,866" stroke="#f0f050" stroke-width="1.34"/>
<polygon points="480.3,819 597.5,813.6 597.5,873 480.3,865.2" fill="none" stroke="#ffffea" stroke-width="2.2"/>
<polygon points="470.9,811.3 603.8,804.2 603.8,880.8 470.9,873" fill="none" stroke="#ffffea" stroke-width="2.4"/>
<path d="M601.5,805L601.5,880" stroke="#ffffea" stroke-width="2.2"/>
<path d="M476.4,812L476.4,873" stroke="#e23a1a" stroke-width="1.46"/>
<path d="M477,813L600,806.8" stroke="#e23a1a" stroke-width="1.34" stroke-opacity="0.9"/>
<path d="M477,872.3L600,879.2" stroke="#e23a1a" stroke-width="1.34" stroke-opacity="0.9"/>
<path d="M531.5,799.5L531.5,888" stroke="#f0f050" stroke-width="1.22" stroke-opacity="0.9"/>
<path d="M538,799.5L538,888" stroke="#f0f050" stroke-width="1.22" stroke-opacity="0.9"/>
<path d="M596.3,799.5L596.3,888" stroke="#f0f050" stroke-width="1.22" stroke-opacity="0.9"/>
<path d="M605.6,799.5L605.6,888" stroke="#f0f050" stroke-width="1.22" stroke-opacity="0.9"/>
<path d="M624.4,799.5L624.4,888" stroke="#f0f050" stroke-width="1.22" stroke-opacity="0.9"/>
<path d="M631,799.5L631,888" stroke="#f0f050" stroke-width="1.22" stroke-opacity="0.9"/>
<path d="M677.2,799.5L677.2,888" stroke="#f0f050" stroke-width="1.22" stroke-opacity="0.9"/>
<path d="M683.8,799.5L683.8,888" stroke="#f0f050" stroke-width="1.22" stroke-opacity="0.9"/>
<path d="M754.4,799.5L754.4,888" stroke="#f0f050" stroke-width="1.22" stroke-opacity="0.9"/>
<path d="M761,799.5L761,888" stroke="#f0f050" stroke-width="1.22" stroke-opacity="0.9"/>
<path d="M756.9,801L756.9,888" stroke="#e23a1a" stroke-width="1.34"/>
<g fill="#ffe080" fill-opacity="0.7" stroke="#f5a623" stroke-width="1.04"><circle cx="492" cy="812.3" r="1.55"/><circle cx="518.1" cy="810.5" r="1.55"/><circle cx="551.9" cy="808.9" r="1.55"/><circle cx="585.8" cy="806.9" r="1.55"/><circle cx="492" cy="873.8" r="1.55"/><circle cx="518.1" cy="875.3" r="1.55"/><circle cx="551.9" cy="877.3" r="1.55"/><circle cx="585.8" cy="879.3" r="1.55"/><circle cx="474.8" cy="828.8" r="1.55"/><circle cx="474.8" cy="856.6" r="1.55"/><circle cx="551.9" cy="842.2" r="1.55"/><circle cx="572.2" cy="842.2" r="1.55"/></g>
</g>
<rect x="1106" y="937.5" width="166.5" height="19.5" fill="#0a4d0a"/>
<text x="1110" y="952" font-family="Liberation Sans,sans-serif" font-style="italic" font-size="13" fill="#fff" xml:space="preserve" textLength="160">x -461.63 mm  y -97.44 mm</text>
</svg>
<!--/CV-->
</div>
<!--BOTTOM-->
<div id="bottom">
<div class="abs" style="left:0;top:0px;width:1280px;height:36px;background:linear-gradient(#ece9d8 0,#ece9d8 3px,#fff 3px);border-left:1px solid #8a8a9a;border-bottom:2px solid #9a9aa0"></div>
<div class="abs" style="left:424px;top:38px;width:856px;height:18px;background:#fff;border:1px solid #7f9db9;border-bottom:none"></div>
<div class="abs" style="left:0;top:55px;width:1280px;height:3px;background:#3d80d8"></div>
<div id="log">
<div class="ln" style="top:0px;clip-path:inset(3px 0 0 0)"><b style="left:2px">Seleziona entità.</b><span style="left:147px">(</span><span style="left:169px">) aggiunge/toglie selezione,</span><span style="left:326px">seleziona,</span><span style="left:399px">esci</span><span style="left:116px;font-size:14px;top:-3px">+</span></div>
<div class="ln" style="top:19px"><b style="left:2px">Disegna punto.</b><span style="left:112px">seleziona la posizione,</span><span style="left:243px">esci</span></div>
<div class="ln" style="top:45px"><b style="left:4px">Seleziona entità.</b><span style="left:149px">(</span><span style="left:171px">) aggiunge/toglie selezione,</span><span style="left:328px">seleziona,</span><span style="left:401px">esci</span><span style="left:118px;font-size:14px;top:-3px">+</span></div>
</div>
<svg class="abs" style="left:0;top:0" width="1280" height="58" viewBox="0 966 1280 58">
<defs>
<g id="mL"><path d="M0.5,0.5h12v8c0,3.5-2.5,5.5-6,5.5s-6-2-6-5.5z" fill="#fff" stroke="#222" stroke-width="1"/><rect x="1" y="1" width="5.5" height="5" fill="#1030d0"/><path d="M6.5,0.5v5.5M0.5,6h12" stroke="#222" stroke-width="0.9" fill="none"/></g>
<g id="mR"><path d="M0.5,0.5h12v8c0,3.5-2.5,5.5-6,5.5s-6-2-6-5.5z" fill="#fff" stroke="#222" stroke-width="1"/><rect x="6.5" y="1" width="5.5" height="5" fill="#1030d0"/><path d="M6.5,0.5v5.5M0.5,6h12" stroke="#222" stroke-width="0.9" fill="none"/></g>
<g id="mB"><path d="M0.5,0.5h12v8c0,3.5-2.5,5.5-6,5.5s-6-2-6-5.5z" fill="#fff" stroke="#222" stroke-width="1"/><rect x="1" y="1" width="11" height="5" fill="#1030d0"/><path d="M6.5,0.5v5.5M0.5,6h12" stroke="#222" stroke-width="0.9" fill="none"/></g>
</defs>
<clipPath id="cl1"><rect x="1" y="969" width="1278" height="31"/></clipPath>
<g clip-path="url(#cl1)">
<rect x="100.5" y="963.5" width="15" height="8" fill="#ddd" stroke="#222" stroke-width="1"/>
<use href="#mL" x="126.5" y="960.5"/><use href="#mB" x="152" y="960.5"/><use href="#mL" x="306.5" y="960.5"/><use href="#mR" x="379.5" y="960.5"/>
<use href="#mL" x="91" y="979"/><use href="#mR" x="222" y="979"/>
</g>
<rect x="102.5" y="1008.5" width="15" height="8" fill="#ddd" stroke="#222" stroke-width="1"/><text x="110" y="1015" font-family="Liberation Sans,sans-serif" font-weight="bold" font-size="6.5" text-anchor="middle" fill="#000">Ctrl</text>
<use href="#mL" x="128.5" y="1005.5"/><use href="#mB" x="154" y="1005.5"/><use href="#mL" x="308.5" y="1005.5"/><use href="#mR" x="381.5" y="1005.5"/>
<!-- scroll buttons -->
<rect x="1264.5" y="970.5" width="12" height="12.5" rx="2" fill="#c3d4fc" stroke="#e4ebfb" stroke-width="1"/><path d="M1267,979.5l3.5,-3.5l3.5,3.5" stroke="#4d6185" stroke-width="1.9" fill="none"/>
<rect x="1264.5" y="985.5" width="12" height="12.5" rx="2" fill="#c3d4fc" stroke="#e4ebfb" stroke-width="1"/><path d="M1267,990l3.5,3.5l3.5,-3.5" stroke="#4d6185" stroke-width="1.9" fill="none"/>
</svg>
</div>
<!--/BOTTOM-->
</body>
</html>
